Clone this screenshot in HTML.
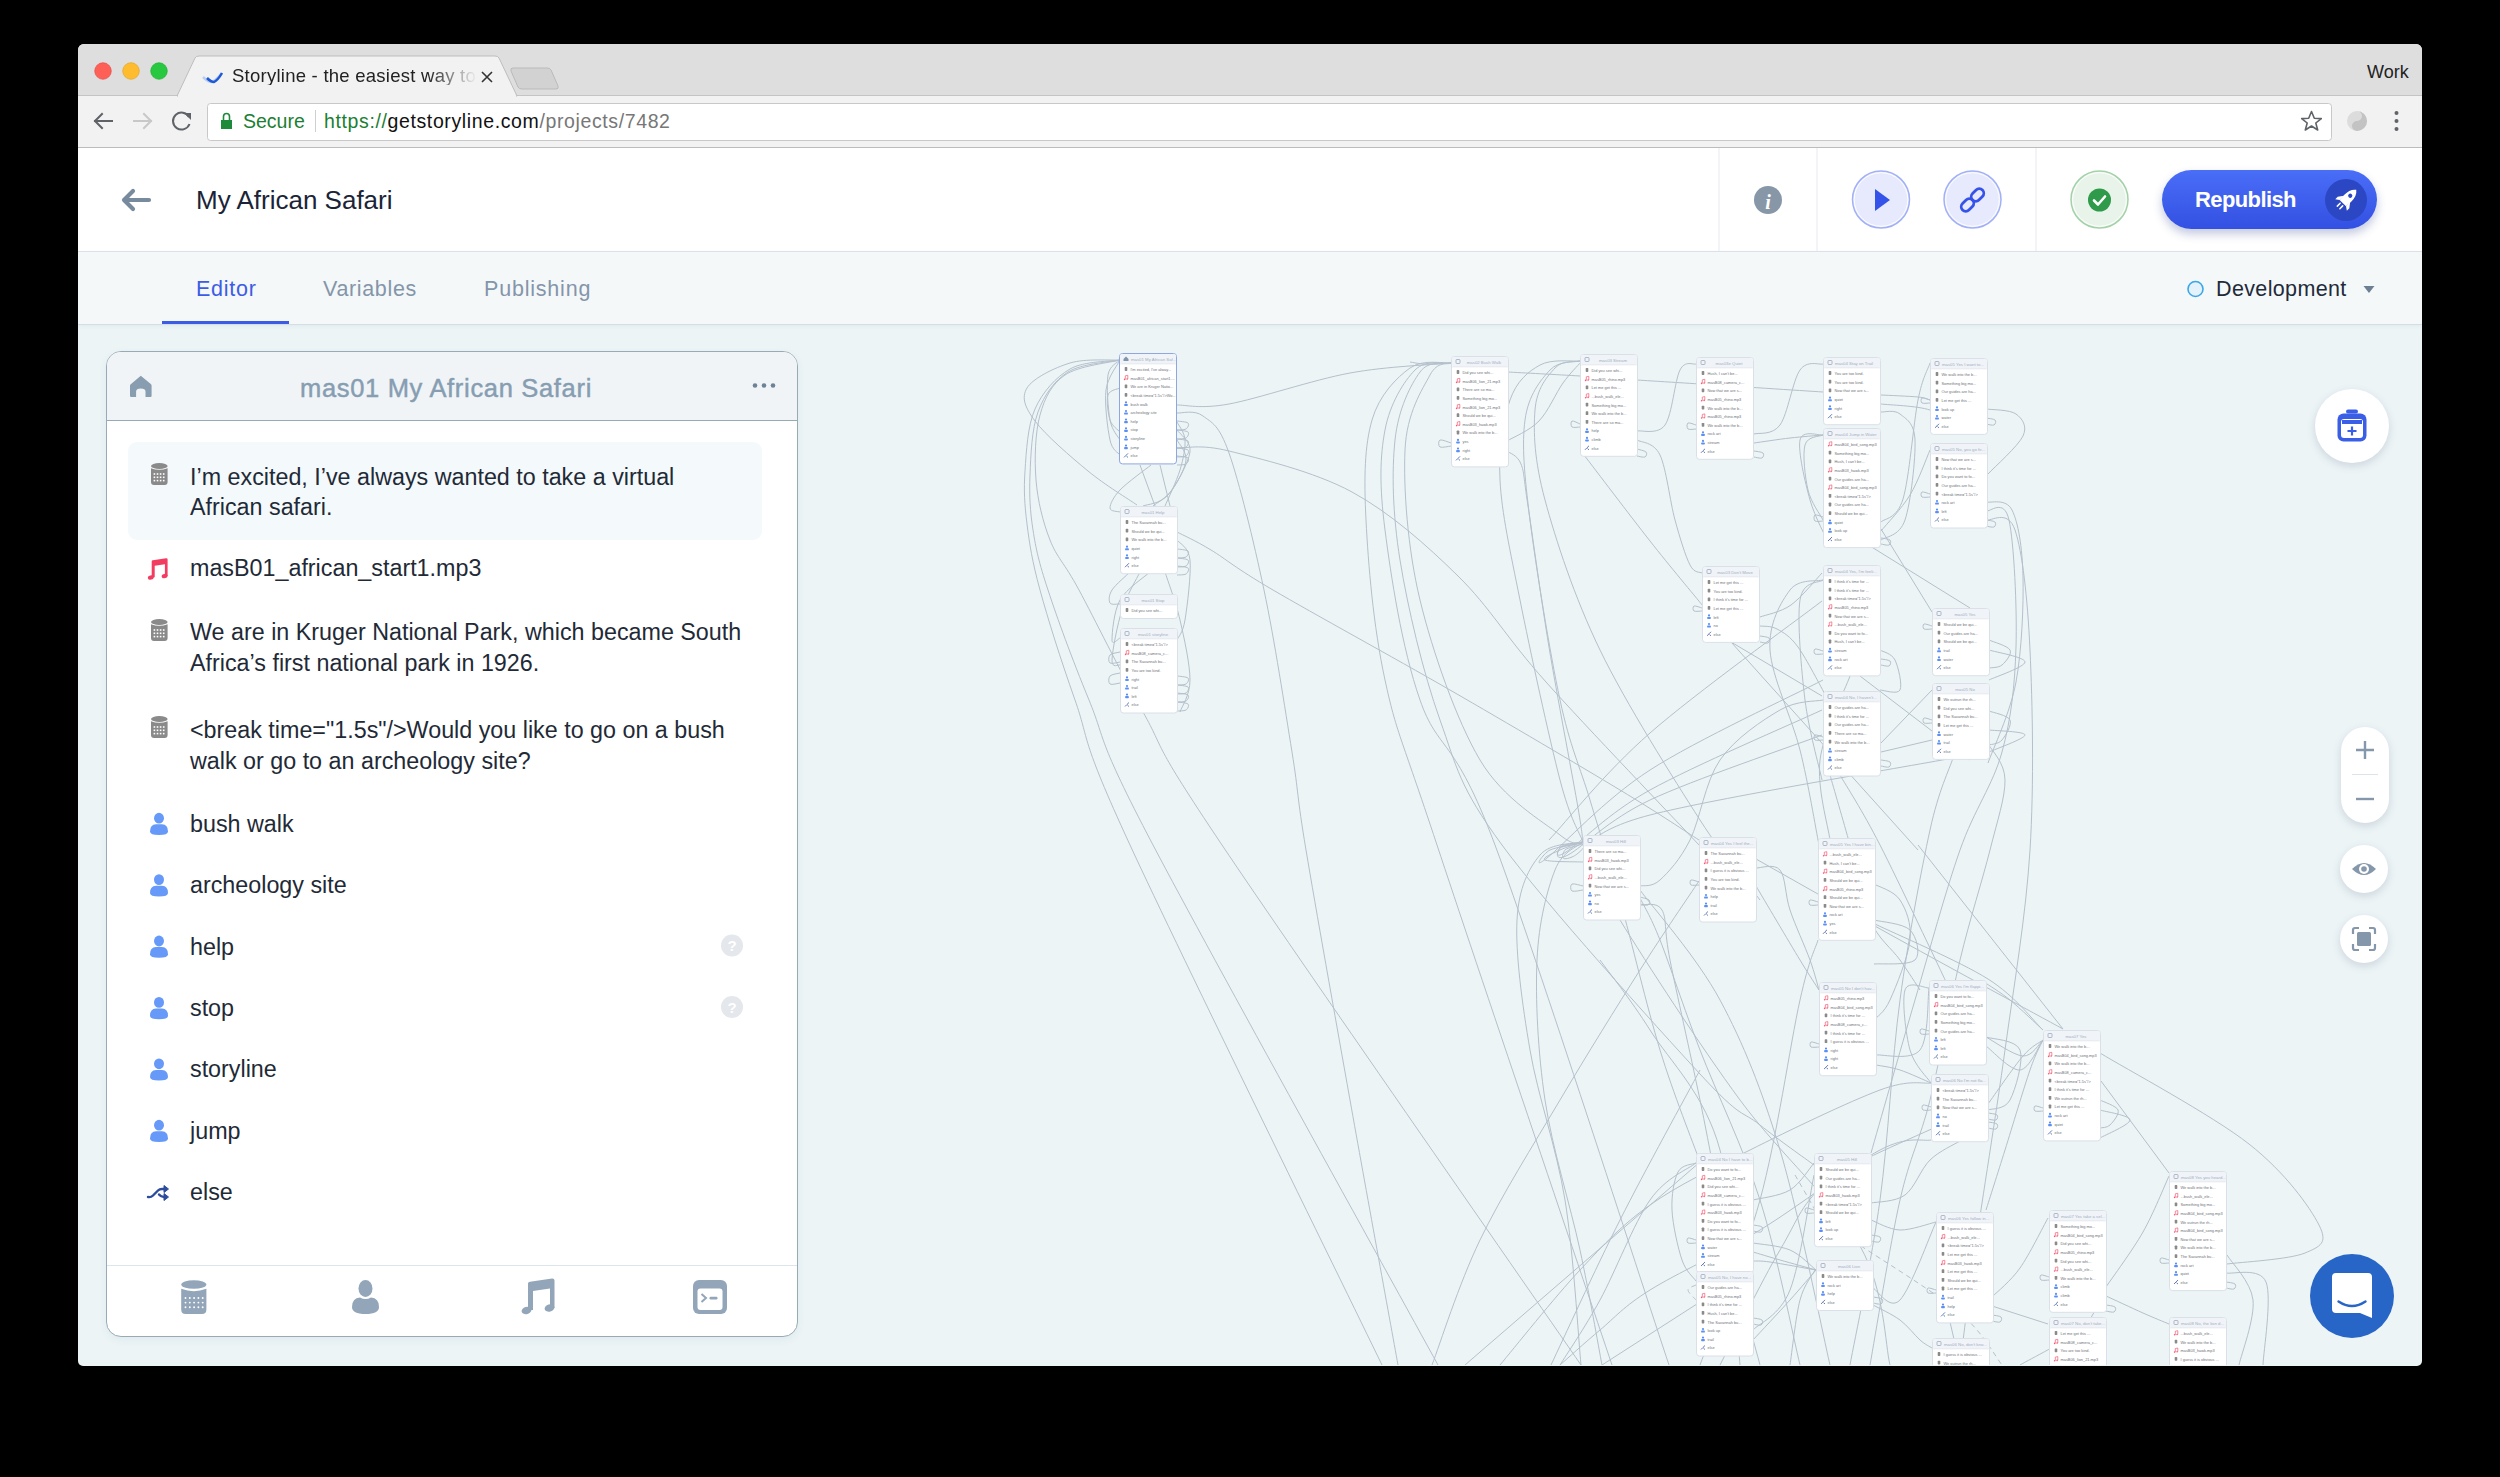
<!DOCTYPE html><html><head><meta charset="utf-8"><style>
*{margin:0;padding:0;box-sizing:border-box}
html,body{width:2500px;height:1477px;background:#000;overflow:hidden;font-family:"Liberation Sans",sans-serif}
.a{position:absolute}
#win{position:absolute;left:78px;top:44px;width:2344px;height:1322px;border-radius:6px 6px 5px 5px;overflow:hidden;background:#ecf4f6}
.t{position:absolute;white-space:nowrap;line-height:1}
</style></head><body>
<div id="win"><div class="a" style="left:-78px;top:-44px;width:2500px;height:1477px"><div class="a" style="left:78px;top:44px;width:2344px;height:52px;background:#dedede"></div><div class="a" style="left:78px;top:95px;width:2344px;height:53px;background:#f2f2f2;border-top:1px solid #c4c4c4;border-bottom:1px solid #bcbcbc"></div><svg class="a" style="left:0;top:0" width="2500" height="160">
<path d="M177 96 L195 58 Q196 56 199 56 L495 56 Q498 56 499 58 L517 96 Z" fill="#f2f2f2" stroke="#bdbdbd" stroke-width="1"/>
<rect x="178" y="95" width="338" height="3" fill="#f2f2f2"/>
<path d="M513 68 L547 68 Q550 68 551 70 L558 86 Q559 89 556 89 L522 89 Q519 89 518 87 L511 71 Q510 68 513 68Z" fill="#d2d2d2" stroke="#bababa" stroke-width="1"/>
<circle cx="103" cy="71" r="8.3" fill="#fe5f57" stroke="#e2463f" stroke-width="0.6"/>
<circle cx="131" cy="71" r="8.3" fill="#febc2e" stroke="#e1a116" stroke-width="0.6"/>
<circle cx="159" cy="71" r="8.3" fill="#28c840" stroke="#1aab29" stroke-width="0.6"/>
<!-- favicon -->
<path d="M203 77 Q208 82 212 82 Q216 80 222 73" stroke="#b9cdf0" stroke-width="2.5" fill="none"/>
<path d="M207 78 Q211 82 214 82 Q218 80 222 73" stroke="#1f5ad6" stroke-width="2.5" fill="none"/>
<!-- close x -->
<path d="M482 72 L492 82 M492 72 L482 82" stroke="#333" stroke-width="1.6"/>
<!-- nav arrows -->
<path d="M95 121 L112 121 M95 121 L102 114 M95 121 L102 128" stroke="#5f6368" stroke-width="2" fill="none" stroke-linecap="square"/>
<path d="M151 121 L134 121 M151 121 L144 114 M151 121 L144 128" stroke="#c8c8c8" stroke-width="2" fill="none" stroke-linecap="square"/>
<path d="M189 117 A8.5 8.5 0 1 0 189.5 124" stroke="#5f6368" stroke-width="2" fill="none"/>
<path d="M184 113 L191 113 L191 120 Z" fill="#5f6368"/>
<!-- address bar -->
<rect x="207.5" y="103.5" width="2124" height="37" rx="3" fill="#fff" stroke="#c8c8c8" stroke-width="1"/>
<rect x="221" y="120" width="11" height="9" fill="#1d8a3a"/>
<path d="M223.5 120 V116.5 A3 3 0 0 1 229.5 116.5 V120" stroke="#1d8a3a" stroke-width="1.6" fill="none"/>
<rect x="315" y="110" width="1" height="22" fill="#cfcfcf"/>
<!-- star -->
<path d="M2311.5 111.5 L2314.3 118.2 L2321.3 118.6 L2315.8 123 L2317.7 130 L2311.5 126 L2305.3 130 L2307.2 123 L2301.7 118.6 L2308.7 118.2 Z" fill="none" stroke="#5f6368" stroke-width="1.6" stroke-linejoin="round"/>
<!-- extension -->
<circle cx="2357" cy="121" r="10" fill="#dcdcdc"/>
<path d="M2357 111 A10 10 0 0 1 2357 131 A5 5 0 0 1 2357 121 A5 5 0 0 0 2357 111Z" fill="#c3c3c3"/>
<circle cx="2396.5" cy="113" r="2" fill="#5f6368"/><circle cx="2396.5" cy="121" r="2" fill="#5f6368"/><circle cx="2396.5" cy="129" r="2" fill="#5f6368"/>
</svg><div class="t" style="left:232px;top:66.9px;font-size:18.5px;color:#222;font-weight:normal;letter-spacing:0.25px;width:245px;overflow:hidden;-webkit-mask-image:linear-gradient(90deg,#000 80%,transparent 100%)">Storyline - the easiest way to c</div><div class="t" style="left:2367px;top:63.2px;font-size:18px;color:#222;font-weight:normal;">Work</div><div class="t" style="left:243px;top:112.1px;font-size:19.5px;color:#1b7f33;font-weight:normal;">Secure</div><div class="t" style="left:324px;top:112.1px;font-size:19.5px;color:#111;font-weight:normal;letter-spacing:0.62px"><span style="color:#1b7f33">https://</span><span style="color:#111">getstoryline.com</span><span style="color:#777">/projects/7482</span></div><div class="a" style="left:78px;top:148px;width:2344px;height:104px;background:#fff;border-bottom:1px solid #dfe3ee"></div><div class="a" style="left:78px;top:252px;width:2344px;height:73px;background:#f4f8f9;border-bottom:1.5px solid #d6dee5;box-shadow:0 1px 4px rgba(60,80,100,0.07)"></div><div class="t" style="left:196px;top:187.0px;font-size:26px;color:#1b2437;font-weight:normal;">My African Safari</div><svg class="a" style="left:0;top:140px" width="2500" height="200">
<g transform="translate(0,-140)">
<path d="M124 200 L149 200 M124 200 L133 191 M124 200 L133 209" stroke="#778a9e" stroke-width="4.2" fill="none" stroke-linecap="round" stroke-linejoin="round"/>
<rect x="1718.5" y="148" width="1" height="103" fill="#e6e9f2"/>
<rect x="1816.5" y="148" width="1" height="103" fill="#e6e9f2"/>
<rect x="2035.5" y="148" width="1" height="103" fill="#e6e9f2"/>
<circle cx="1768" cy="200" r="14" fill="#8797a8"/>
<text x="1768" y="209" font-family="Liberation Serif" font-style="italic" font-weight="bold" font-size="20" fill="#fff" text-anchor="middle">i</text>
<circle cx="1881" cy="199.5" r="28.5" fill="#e7eafc" stroke="#a2b1f7" stroke-width="1.5"/><circle cx="1881" cy="199.5" r="26.8" fill="none" stroke="#fff" stroke-width="1"/>
<path d="M1875 189 L1890 200 L1875 211 Z" fill="#3553e8"/>
<circle cx="1972.5" cy="199.5" r="28.5" fill="#e7eafc" stroke="#a2b1f7" stroke-width="1.5"/><circle cx="1972.5" cy="199.5" r="26.8" fill="none" stroke="#fff" stroke-width="1"/>
<g stroke="#3553e8" stroke-width="2.8" fill="none" stroke-linecap="round">
<rect x="1963" y="198" width="9" height="14" rx="4.5" transform="rotate(45 1967.5 205)"/>
<rect x="1973" y="188" width="9" height="14" rx="4.5" transform="rotate(45 1977.5 195)"/>
</g>
<circle cx="2099.5" cy="199.5" r="28.5" fill="#e8f3ea" stroke="#a3d2a9" stroke-width="1.5"/><circle cx="2099.5" cy="199.5" r="26.8" fill="none" stroke="#fff" stroke-width="1"/>
<circle cx="2099.5" cy="200" r="11.5" fill="#2e9a4a"/>
<path d="M2094 200.5 L2098 204.5 L2105 196.5" stroke="#fff" stroke-width="2.6" fill="none" stroke-linecap="round" stroke-linejoin="round"/>
</g></svg><div class="a" style="left:2162px;top:170px;width:215px;height:59px;border-radius:30px;background:linear-gradient(180deg,#4a6ef8,#3350e2);box-shadow:0 5px 10px rgba(40,60,140,0.28)"></div><div class="t" style="left:2195px;top:188.9px;font-size:22px;color:#fff;font-weight:bold;letter-spacing:-0.6px">Republish</div><svg class="a" style="left:2325px;top:179px" width="42" height="42"><circle cx="21" cy="21" r="21" fill="#2c47c4"/>
<g transform="rotate(45 21 21)">
<path d="M21 6.5 Q26.2 10.5 25.8 18.5 L25.5 25.5 L16.5 25.5 L16.2 18.5 Q15.8 10.5 21 6.5Z" fill="#fff"/>
<path d="M16.6 19.5 L12.8 24.5 L12.8 28 L16.5 25.5Z M25.4 19.5 L29.2 24.5 L29.2 28 L25.5 25.5Z" fill="#fff"/>
<circle cx="21" cy="15" r="2.1" fill="#2c47c4"/>
<path d="M19.2 27.5 L19.2 31.5 M22.8 27.5 L22.8 31.5" stroke="#fff" stroke-width="1.5" stroke-linecap="round"/>
</g></svg><div class="t" style="left:196px;top:279.3px;font-size:21.5px;color:#3d5ce5;font-weight:normal;letter-spacing:0.75px">Editor</div><div class="t" style="left:323px;top:279.3px;font-size:21.5px;color:#8595a9;font-weight:normal;letter-spacing:0.65px">Variables</div><div class="t" style="left:484px;top:279.3px;font-size:21.5px;color:#8595a9;font-weight:normal;letter-spacing:0.8px">Publishing</div><div class="a" style="left:162px;top:321px;width:127px;height:3px;background:#3d5ce5"></div><svg class="a" style="left:2180px;top:275px" width="200" height="30"><circle cx="15.5" cy="14" r="7.5" fill="#e4f2fb" stroke="#3ca6e6" stroke-width="1.6"/>
<path d="M183.5 11 L194.5 11 L189 18 Z" fill="#6c7f93"/></svg><div class="t" style="left:2216px;top:279.3px;font-size:21.5px;color:#1f2a3a;font-weight:normal;letter-spacing:0.36px">Development</div><svg class="a" style="left:0;top:0" width="2500" height="1365" font-family="Liberation Sans"><g fill="none" stroke="#b4c0cb" stroke-width="1"><path d="M1120 360 C1111.7 360.5 1085.5 358.3 1070.0 363.0 C1054.5 367.7 1032.8 378.3 1027.0 388.0 C1021.2 397.7 1024.8 407.2 1035.0 421.0 C1045.2 434.8 1071.0 457.0 1088.0 471.0 C1105.0 485.0 1128.8 499.3 1137.0 505.0"/><path d="M1120 360 C1111.7 361.5 1084.2 360.8 1070.0 369.0 C1055.8 377.2 1042.5 392.0 1035.0 409.0 C1027.5 426.0 1026.3 451.8 1025.0 471.0 C1023.7 490.2 1024.5 504.2 1027.0 524.0 C1029.5 543.8 1032.0 560.7 1040.0 590.0 C1048.0 619.3 1060.0 657.5 1075.0 700.0 C1090.0 742.5 1078.8 734.2 1130.0 845.0 C1181.2 955.8 1340.0 1278.3 1382.0 1365.0"/><path d="M1120 360 C1111.3 362.0 1081.7 363.3 1068.0 372.0 C1054.3 380.7 1044.3 394.8 1038.0 412.0 C1031.7 429.2 1030.8 455.3 1030.0 475.0 C1029.2 494.7 1030.0 510.8 1033.0 530.0 C1036.0 549.2 1038.7 561.7 1048.0 590.0 C1057.3 618.3 1071.5 657.5 1089.0 700.0 C1106.5 742.5 1094.8 734.2 1153.0 845.0 C1211.2 955.8 1390.5 1278.3 1438.0 1365.0"/><path d="M1120 360 C1110.8 362.5 1078.3 365.8 1065.0 375.0 C1051.7 384.2 1044.8 397.5 1040.0 415.0 C1035.2 432.5 1034.3 459.2 1036.0 480.0 C1037.7 500.8 1042.8 521.7 1050.0 540.0 C1057.2 558.3 1063.5 561.3 1079.0 590.0 C1094.5 618.7 1119.2 669.5 1143.0 712.0 C1166.8 754.5 1149.0 736.2 1222.0 845.0 C1295.0 953.8 1521.2 1278.3 1581.0 1365.0"/><path d="M1120 360 C1118.0 362.5 1109.7 365.0 1108.0 375.0 C1106.3 385.0 1108.0 409.2 1110.0 420.0 C1112.0 430.8 1118.3 436.7 1120.0 440.0"/><path d="M1120 360 C1117.7 365.0 1107.7 376.7 1106.0 390.0 C1104.3 403.3 1107.7 429.2 1110.0 440.0 C1112.3 450.8 1118.3 452.5 1120.0 455.0"/><path d="M1120 388 C1118.0 389.2 1109.7 389.7 1108.0 395.0 C1106.3 400.3 1108.0 413.8 1110.0 420.0 C1112.0 426.2 1118.3 430.0 1120.0 432.0"/><path d="M1177 405 C1185.7 404.8 1200.2 409.3 1229.0 404.0 C1257.8 398.7 1313.0 379.8 1350.0 373.0 C1387.0 366.2 1434.2 364.7 1451.0 363.0"/><path d="M1177 413 C1181.3 413.5 1194.3 409.3 1203.0 416.0 C1211.7 422.7 1218.8 424.0 1229.0 453.0 C1239.2 482.0 1253.5 540.2 1264.0 590.0 C1274.5 639.8 1285.0 708.7 1292.0 752.0 C1299.0 795.3 1296.3 792.0 1306.0 850.0 C1315.7 908.0 1334.7 1014.2 1350.0 1100.0 C1365.3 1185.8 1390.0 1320.8 1398.0 1365.0"/><path d="M1177 448 C1185.7 448.5 1199.8 443.7 1229.0 451.0 C1258.2 458.3 1313.8 471.2 1352.0 492.0 C1390.2 512.8 1425.7 544.3 1458.0 576.0 C1490.3 607.7 1505.7 637.0 1546.0 682.0 C1586.3 727.0 1674.3 818.7 1700.0 846.0"/><path d="M1177 532 C1182.7 535.0 1195.0 540.3 1211.0 550.0 C1227.0 559.7 1233.2 566.7 1273.0 590.0 C1312.8 613.3 1392.2 656.7 1450.0 690.0 C1507.8 723.3 1578.5 765.0 1620.0 790.0 C1661.5 815.0 1685.8 831.7 1699.0 840.0"/><path d="M1177 440 C1178.5 443.3 1186.8 451.7 1186.0 460.0 C1185.2 468.3 1177.5 482.3 1172.0 490.0 C1166.5 497.7 1156.2 503.3 1153.0 506.0"/><path d="M1177 430 C1179.2 433.7 1191.5 441.2 1190.0 452.0 C1188.5 462.8 1175.8 486.0 1168.0 495.0 C1160.2 504.0 1147.2 504.2 1143.0 506.0"/><path d="M1177 422 C1178.3 425.0 1184.5 432.0 1185.0 440.0 C1185.5 448.0 1183.3 459.0 1180.0 470.0 C1176.7 481.0 1167.5 500.0 1165.0 506.0"/><path d="M1151 465 C1145.8 469.2 1126.8 482.8 1120.0 490.0 C1113.2 497.2 1110.0 504.3 1110.0 508.0 C1110.0 511.7 1118.3 511.3 1120.0 512.0"/><path d="M1160 465 L1170 506"/><path d="M1140 465 L1155 506"/><path d="M1177 421 C1178.8 421.3 1186.5 421.7 1188.0 423.0 C1189.5 424.3 1187.8 427.8 1186.0 429.0 C1184.2 430.2 1178.5 429.8 1177.0 430.0"/><path d="M1177 430 C1178.8 430.3 1186.5 430.7 1188.0 432.0 C1189.5 433.3 1187.8 436.8 1186.0 438.0 C1184.2 439.2 1178.5 438.8 1177.0 439.0"/><path d="M1177 439 C1178.8 439.3 1186.5 439.7 1188.0 441.0 C1189.5 442.3 1187.8 445.8 1186.0 447.0 C1184.2 448.2 1178.5 447.8 1177.0 448.0"/><path d="M1177 448 C1178.8 448.3 1186.5 448.7 1188.0 450.0 C1189.5 451.3 1187.8 454.8 1186.0 456.0 C1184.2 457.2 1178.5 456.8 1177.0 457.0"/><path d="M1177 456 C1178.8 456.3 1186.5 456.7 1188.0 458.0 C1189.5 459.3 1187.8 462.8 1186.0 464.0 C1184.2 465.2 1178.5 464.8 1177.0 465.0"/><path d="M1177 549 C1178.8 549.3 1186.5 549.7 1188.0 551.0 C1189.5 552.3 1187.8 555.8 1186.0 557.0 C1184.2 558.2 1178.5 557.8 1177.0 558.0"/><path d="M1177 558 C1178.8 558.3 1186.5 558.7 1188.0 560.0 C1189.5 561.3 1187.8 564.8 1186.0 566.0 C1184.2 567.2 1178.5 566.8 1177.0 567.0"/><path d="M1177 566 C1178.8 566.3 1186.5 566.7 1188.0 568.0 C1189.5 569.3 1187.8 572.8 1186.0 574.0 C1184.2 575.2 1178.5 574.8 1177.0 575.0"/><path d="M1177 540 C1179.2 543.3 1188.7 546.7 1190.0 560.0 C1191.3 573.3 1187.2 606.7 1185.0 620.0 C1182.8 633.3 1178.3 636.7 1177.0 640.0"/><path d="M1130 572 C1127.0 575.0 1115.3 584.8 1112.0 590.0 C1108.7 595.2 1108.7 600.7 1110.0 603.0 C1111.3 605.3 1118.3 603.8 1120.0 604.0"/><path d="M1150 572 C1145.0 576.7 1126.3 588.7 1120.0 600.0 C1113.7 611.3 1112.0 633.7 1112.0 640.0 C1112.0 646.3 1118.7 638.3 1120.0 638.0"/><path d="M1165 572 C1167.5 580.0 1175.8 602.0 1180.0 620.0 C1184.2 638.0 1190.0 664.7 1190.0 680.0 C1190.0 695.3 1181.7 706.7 1180.0 712.0"/><path d="M1140 572 C1137.0 578.3 1126.7 595.3 1122.0 610.0 C1117.3 624.7 1112.3 650.8 1112.0 660.0 C1111.7 669.2 1118.7 664.2 1120.0 665.0"/><path d="M1177 676 C1178.8 676.3 1186.5 676.7 1188.0 678.0 C1189.5 679.3 1187.8 682.8 1186.0 684.0 C1184.2 685.2 1178.5 684.8 1177.0 685.0"/><path d="M1177 685 C1178.8 685.3 1186.5 685.7 1188.0 687.0 C1189.5 688.3 1187.8 691.8 1186.0 693.0 C1184.2 694.2 1178.5 693.8 1177.0 694.0"/><path d="M1177 693 C1178.8 693.3 1186.5 693.7 1188.0 695.0 C1189.5 696.3 1187.8 699.8 1186.0 701.0 C1184.2 702.2 1178.5 701.8 1177.0 702.0"/><path d="M1177 702 C1178.8 702.3 1186.5 702.7 1188.0 704.0 C1189.5 705.3 1187.8 708.8 1186.0 710.0 C1184.2 711.2 1178.5 710.8 1177.0 711.0"/><path d="M1120 652 C1118.3 652.5 1111.7 653.2 1110.0 655.0 C1108.3 656.8 1108.3 661.8 1110.0 663.0 C1111.7 664.2 1118.3 662.2 1120.0 662.0"/><path d="M1120 673 C1118.3 673.5 1111.7 674.2 1110.0 676.0 C1108.3 677.8 1108.3 682.8 1110.0 684.0 C1111.7 685.2 1118.3 683.2 1120.0 683.0"/><path d="M1451 363 C1444.2 363.8 1423.2 358.5 1410.0 368.0 C1396.8 377.5 1379.3 394.7 1372.0 420.0 C1364.7 445.3 1363.8 476.7 1366.0 520.0 C1368.2 563.3 1373.2 625.8 1385.0 680.0 C1396.8 734.2 1399.2 730.8 1437.0 845.0 C1474.8 959.2 1582.8 1278.3 1612.0 1365.0"/><path d="M1451 363 C1445.0 364.2 1426.0 358.8 1415.0 370.0 C1404.0 381.2 1390.0 403.3 1385.0 430.0 C1380.0 456.7 1379.2 485.0 1385.0 530.0 C1390.8 575.0 1401.7 647.5 1420.0 700.0 C1438.3 752.5 1453.5 734.2 1495.0 845.0 C1536.5 955.8 1640.0 1278.3 1669.0 1365.0"/><path d="M1451 363 C1445.8 364.5 1429.3 359.2 1420.0 372.0 C1410.7 384.8 1398.3 408.7 1395.0 440.0 C1391.7 471.3 1392.5 513.3 1400.0 560.0 C1407.5 606.7 1423.0 672.5 1440.0 720.0 C1457.0 767.5 1458.7 786.0 1502.0 845.0 C1545.3 904.0 1657.0 1027.3 1700.0 1074.0 C1743.0 1120.7 1741.0 1109.8 1760.0 1125.0 C1779.0 1140.2 1805.0 1158.3 1814.0 1165.0"/><path d="M1451 363 C1447.5 365.0 1437.7 360.5 1430.0 375.0 C1422.3 389.5 1406.7 412.5 1405.0 450.0 C1403.3 487.5 1407.5 548.3 1420.0 600.0 C1432.5 651.7 1456.7 720.8 1480.0 760.0 C1503.3 799.2 1542.8 821.3 1560.0 835.0 C1577.2 848.7 1579.2 840.8 1583.0 842.0"/><path d="M1451 363 C1446.7 363.2 1431.8 364.2 1425.0 364.0 C1418.2 363.8 1412.5 362.3 1410.0 362.0"/><path d="M1451 443 C1449.2 442.5 1441.8 439.3 1440.0 440.0 C1438.2 440.7 1438.2 446.0 1440.0 447.0 C1441.8 448.0 1449.2 446.2 1451.0 446.0"/><path d="M1580 361 C1573.3 361.7 1551.7 358.5 1540.0 365.0 C1528.3 371.5 1516.7 380.8 1510.0 400.0 C1503.3 419.2 1498.3 446.7 1500.0 480.0 C1501.7 513.3 1510.0 550.0 1520.0 600.0 C1530.0 650.0 1549.5 739.7 1560.0 780.0 C1570.5 820.3 1579.2 831.7 1583.0 842.0"/><path d="M1580 361 C1575.0 362.5 1559.2 360.2 1550.0 370.0 C1540.8 379.8 1528.3 395.0 1525.0 420.0 C1521.7 445.0 1524.2 473.3 1530.0 520.0 C1535.8 566.7 1550.0 653.3 1560.0 700.0 C1570.0 746.7 1580.0 766.7 1590.0 800.0 C1600.0 833.3 1608.3 858.3 1620.0 900.0 C1631.7 941.7 1646.7 1006.3 1660.0 1050.0 C1673.3 1093.7 1693.3 1143.3 1700.0 1162.0"/><path d="M1580 361 C1575.8 362.2 1562.5 359.8 1555.0 368.0 C1547.5 376.2 1536.7 388.0 1535.0 410.0 C1533.3 432.0 1534.2 460.0 1545.0 500.0 C1555.8 540.0 1574.2 596.7 1600.0 650.0 C1625.8 703.3 1673.3 778.3 1700.0 820.0 C1726.7 861.7 1750.0 886.7 1760.0 900.0"/><path d="M1508 372 C1520.0 372.7 1558.5 374.7 1580.0 376.0 C1601.5 377.3 1617.0 378.7 1637.0 380.0 C1657.0 381.3 1669.0 382.0 1700.0 384.0 C1731.0 386.0 1802.5 390.7 1823.0 392.0"/><path d="M1507 441 C1512.3 437.7 1529.7 430.7 1539.0 421.0 C1548.3 411.3 1556.0 392.8 1563.0 383.0 C1570.0 373.2 1578.0 365.5 1581.0 362.0"/><path d="M1507 451 C1509.3 453.2 1517.5 454.8 1521.0 464.0 C1524.5 473.2 1523.3 475.5 1528.0 506.0 C1532.7 536.5 1540.8 597.7 1549.0 647.0 C1557.2 696.3 1571.3 769.5 1577.0 802.0 C1582.7 834.5 1582.0 835.3 1583.0 842.0"/><path d="M1584 455 C1595.0 469.3 1630.2 515.8 1650.0 541.0 C1669.8 566.2 1694.2 595.2 1703.0 606.0"/><path d="M1637 431 C1641.7 430.0 1657.8 435.2 1665.0 425.0 C1672.2 414.8 1674.8 380.2 1680.0 370.0 C1685.2 359.8 1693.3 365.0 1696.0 364.0"/><path d="M1637 440 C1640.8 442.5 1653.7 441.7 1660.0 455.0 C1666.3 468.3 1670.0 501.7 1675.0 520.0 C1680.0 538.3 1685.5 556.2 1690.0 565.0 C1694.5 573.8 1700.0 571.7 1702.0 573.0"/><path d="M1637 449 C1638.5 449.5 1644.7 450.7 1646.0 452.0 C1647.3 453.3 1646.5 456.3 1645.0 457.0 C1643.5 457.7 1638.3 456.2 1637.0 456.0"/><path d="M1580 424 C1578.7 423.5 1573.3 420.5 1572.0 421.0 C1570.7 421.5 1570.7 426.0 1572.0 427.0 C1573.3 428.0 1578.7 427.0 1580.0 427.0"/><path d="M1754 434 C1758.3 432.5 1772.3 435.7 1780.0 425.0 C1787.7 414.3 1792.8 380.2 1800.0 370.0 C1807.2 359.8 1819.2 365.0 1823.0 364.0"/><path d="M1754 443 C1760.0 442.2 1778.5 439.3 1790.0 438.0 C1801.5 436.7 1817.5 435.5 1823.0 435.0"/><path d="M1754 451 C1755.5 451.3 1761.7 451.8 1763.0 453.0 C1764.3 454.2 1763.5 457.3 1762.0 458.0 C1760.5 458.7 1755.3 457.2 1754.0 457.0"/><path d="M1696 425 C1694.7 424.7 1689.3 422.3 1688.0 423.0 C1686.7 423.7 1686.7 428.0 1688.0 429.0 C1689.3 430.0 1694.7 429.0 1696.0 429.0"/><path d="M1583 842 C1575.8 844.2 1551.0 842.0 1540.0 855.0 C1529.0 868.0 1518.7 887.5 1517.0 920.0 C1515.3 952.5 1522.0 1003.3 1530.0 1050.0 C1538.0 1096.7 1556.5 1147.5 1565.0 1200.0 C1573.5 1252.5 1578.3 1337.5 1581.0 1365.0"/><path d="M1583 842 C1578.3 846.7 1562.7 850.3 1555.0 870.0 C1547.3 889.7 1538.7 921.7 1537.0 960.0 C1535.3 998.3 1537.8 1051.7 1545.0 1100.0 C1552.2 1148.3 1570.5 1205.8 1580.0 1250.0 C1589.5 1294.2 1598.3 1345.8 1602.0 1365.0"/><path d="M1432 1365 C1440.0 1344.2 1458.7 1284.2 1480.0 1240.0 C1501.3 1195.8 1533.3 1145.0 1560.0 1100.0 C1586.7 1055.0 1616.8 1006.5 1640.0 970.0 C1663.2 933.5 1689.2 895.8 1699.0 881.0"/><path d="M1465 1365 L1700 1162"/><path d="M1551 1365 C1562.5 1340.8 1595.2 1269.2 1620.0 1220.0 C1644.8 1170.8 1686.7 1095.0 1700.0 1070.0"/><path d="M1602 1365 L1700 1302"/><path d="M1583 842 C1579.2 843.3 1566.3 847.0 1560.0 850.0 C1553.7 853.0 1541.2 858.0 1545.0 860.0 C1548.8 862.0 1576.7 861.7 1583.0 862.0"/><path d="M1583 842 C1577.5 843.3 1556.0 847.3 1550.0 850.0 C1544.0 852.7 1530.3 871.3 1547.0 858.0 C1563.7 844.7 1604.0 799.7 1650.0 770.0 C1696.0 740.3 1794.2 695.0 1823.0 680.0"/><path d="M1583 886 C1581.2 885.7 1573.8 883.2 1572.0 884.0 C1570.2 884.8 1570.2 890.0 1572.0 891.0 C1573.8 892.0 1581.2 890.2 1583.0 890.0"/><path d="M1640 886 C1643.3 885.0 1651.7 887.7 1660.0 880.0 C1668.3 872.3 1680.0 860.0 1690.0 840.0 C1700.0 820.0 1705.0 781.7 1720.0 760.0 C1735.0 738.3 1762.8 720.0 1780.0 710.0 C1797.2 700.0 1815.8 701.7 1823.0 700.0"/><path d="M1640 897 C1641.5 897.5 1647.7 898.7 1649.0 900.0 C1650.3 901.3 1649.5 904.3 1648.0 905.0 C1646.5 905.7 1641.3 904.2 1640.0 904.0"/><path d="M1640 905 C1643.7 905.8 1657.0 900.8 1662.0 910.0 C1667.0 919.2 1663.7 928.3 1670.0 960.0 C1676.3 991.7 1690.0 1051.7 1700.0 1100.0 C1710.0 1148.3 1720.0 1205.8 1730.0 1250.0 C1740.0 1294.2 1755.0 1345.8 1760.0 1365.0"/><path d="M1823 435 C1820.0 436.7 1807.5 435.8 1805.0 445.0 C1802.5 454.2 1805.0 477.5 1808.0 490.0 C1811.0 502.5 1820.5 515.0 1823.0 520.0"/><path d="M1823 435 C1819.2 435.8 1802.2 429.2 1800.0 440.0 C1797.8 450.8 1805.0 482.3 1810.0 500.0 C1815.0 517.7 1826.7 538.3 1830.0 546.0"/><path d="M1823 517 C1821.7 516.7 1816.3 514.3 1815.0 515.0 C1813.7 515.7 1813.7 520.0 1815.0 521.0 C1816.3 522.0 1821.7 521.0 1823.0 521.0"/><path d="M1881 395 C1887.2 395.3 1909.8 396.2 1918.0 397.0 C1926.2 397.8 1928.0 399.5 1930.0 400.0"/><path d="M1881 404 C1889.2 405.0 1916.8 405.7 1930.0 410.0 C1943.2 414.3 1955.0 426.7 1960.0 430.0"/><path d="M1881 412 C1884.2 412.3 1894.3 409.3 1900.0 414.0 C1905.7 418.7 1914.2 422.3 1915.0 440.0 C1915.8 457.7 1910.7 503.3 1905.0 520.0 C1899.3 536.7 1885.0 536.7 1881.0 540.0"/><path d="M1881 522 C1884.7 518.2 1896.8 519.3 1903.0 499.0 C1909.2 478.7 1913.5 422.7 1918.0 400.0 C1922.5 377.3 1928.0 369.2 1930.0 363.0"/><path d="M1881 531 C1885.8 525.0 1901.8 508.5 1910.0 495.0 C1918.2 481.5 1926.7 457.5 1930.0 450.0"/><path d="M1870 546 L1970 608"/><path d="M1881 529 L1932 612"/><path d="M1881 538 C1882.5 538.3 1888.7 538.8 1890.0 540.0 C1891.3 541.2 1890.5 544.3 1889.0 545.0 C1887.5 545.7 1882.3 544.2 1881.0 544.0"/><path d="M1986 409 C1991.0 409.8 2009.8 409.5 2016.0 414.0 C2022.2 418.5 2027.7 426.0 2023.0 436.0 C2018.3 446.0 1993.8 467.7 1988.0 474.0"/><path d="M1986 418 C1987.5 418.3 1993.7 418.8 1995.0 420.0 C1996.3 421.2 1995.5 424.3 1994.0 425.0 C1992.5 425.7 1987.3 424.2 1986.0 424.0"/><path d="M1930 400 C1928.7 399.7 1923.3 397.5 1922.0 398.0 C1920.7 398.5 1920.7 402.2 1922.0 403.0 C1923.3 403.8 1928.7 403.0 1930.0 403.0"/><path d="M1930 494 C1928.7 493.7 1923.3 491.5 1922.0 492.0 C1920.7 492.5 1920.7 496.2 1922.0 497.0 C1923.3 497.8 1928.7 497.0 1930.0 497.0"/><path d="M1986 502 C1990.3 503.3 2005.8 497.7 2012.0 510.0 C2018.2 522.3 2022.3 547.3 2023.0 576.0 C2023.7 604.7 2021.8 650.8 2016.0 682.0 C2010.2 713.2 1992.7 749.5 1988.0 763.0"/><path d="M1986 511 C1989.8 512.5 2004.0 497.3 2009.0 520.0 C2014.0 542.7 2017.2 608.3 2016.0 647.0 C2014.8 685.7 2011.3 718.2 2002.0 752.0 C1992.7 785.8 1974.5 808.7 1960.0 850.0 C1945.5 891.3 1929.8 949.5 1915.0 1000.0 C1900.2 1050.5 1878.3 1127.5 1871.0 1153.0"/><path d="M1986 520 C1987.5 520.3 1993.7 520.8 1995.0 522.0 C1996.3 523.2 1995.5 526.3 1994.0 527.0 C1992.5 527.7 1987.3 526.2 1986.0 526.0"/><path d="M1760 617 C1765.2 615.0 1780.7 612.3 1791.0 605.0 C1801.3 597.7 1816.8 578.3 1822.0 573.0"/><path d="M1760 626 C1762.8 626.5 1770.7 625.5 1777.0 629.0 C1783.3 632.5 1789.8 635.8 1798.0 647.0 C1806.2 658.2 1821.3 687.8 1826.0 696.0"/><path d="M1549 840 C1565.8 822.2 1604.5 772.8 1650.0 733.0 C1695.5 693.2 1793.3 623.0 1822.0 601.0"/><path d="M1583 842 C1579.5 842.7 1564.8 844.3 1562.0 846.0 C1559.2 847.7 1551.3 861.3 1566.0 852.0 C1580.7 842.7 1607.3 813.7 1650.0 790.0 C1692.7 766.3 1793.3 723.3 1822.0 710.0"/><path d="M1583 843 C1579.2 843.8 1562.5 846.0 1560.0 848.0 C1557.5 850.0 1553.0 863.0 1568.0 855.0 C1583.0 847.0 1607.7 820.0 1650.0 800.0 C1692.3 780.0 1793.3 745.8 1822.0 735.0"/><path d="M1583 844 C1580.0 845.0 1566.8 847.8 1565.0 850.0 C1563.2 852.2 1557.8 862.8 1572.0 857.0 C1586.2 851.2 1586.5 831.5 1650.0 815.0 C1713.5 798.5 1902.5 767.5 1953.0 758.0"/><path d="M1731 642 L1822 696"/><path d="M1731 642 L1918 850"/><path d="M1860 676 L1970 760"/><path d="M1850 676 C1845.0 690.0 1823.3 732.7 1820.0 760.0 C1816.7 787.3 1828.3 826.7 1830.0 840.0"/><path d="M1880 650 C1882.5 651.7 1891.7 653.3 1895.0 660.0 C1898.3 666.7 1902.5 685.0 1900.0 690.0 C1897.5 695.0 1883.3 690.0 1880.0 690.0"/><path d="M1881 659 C1882.5 659.3 1888.7 659.8 1890.0 661.0 C1891.3 662.2 1890.5 665.3 1889.0 666.0 C1887.5 666.7 1882.3 665.2 1881.0 665.0"/><path d="M1881 743 L1932 690"/><path d="M1881 752 L1932 740"/><path d="M1881 760 C1882.5 760.3 1888.7 760.8 1890.0 762.0 C1891.3 763.2 1890.5 766.3 1889.0 767.0 C1887.5 767.7 1882.3 766.2 1881.0 766.0"/><path d="M1989 640 C1992.5 641.7 2007.8 645.8 2010.0 650.0 C2012.2 654.2 2005.5 662.0 2002.0 665.0 C1998.5 668.0 1991.2 667.5 1989.0 668.0"/><path d="M1989 650 C1995.0 652.0 2025.0 657.0 2025.0 662.0 C2025.0 667.0 1995.0 677.0 1989.0 680.0"/><path d="M1989 711 C1992.5 712.5 2007.8 715.2 2010.0 720.0 C2012.2 724.8 2005.5 735.8 2002.0 740.0 C1998.5 744.2 1991.2 744.2 1989.0 745.0"/><path d="M1989 730 C1995.0 730.8 2025.0 731.3 2025.0 735.0 C2025.0 738.7 1995.0 749.2 1989.0 752.0"/><path d="M1932 626 C1930.7 625.7 1925.3 623.5 1924.0 624.0 C1922.7 624.5 1922.7 628.2 1924.0 629.0 C1925.3 629.8 1930.7 629.0 1932.0 629.0"/><path d="M1932 720 C1930.7 719.7 1925.3 717.5 1924.0 718.0 C1922.7 718.5 1922.7 722.2 1924.0 723.0 C1925.3 723.8 1930.7 723.0 1932.0 723.0"/><path d="M1702 608 C1700.7 607.7 1695.3 605.5 1694.0 606.0 C1692.7 606.5 1692.7 610.2 1694.0 611.0 C1695.3 611.8 1700.7 611.0 1702.0 611.0"/><path d="M1760 636 C1761.5 636.3 1767.7 636.8 1769.0 638.0 C1770.3 639.2 1769.5 642.3 1768.0 643.0 C1766.5 643.7 1761.3 642.2 1760.0 642.0"/><path d="M1823 580 C1817.5 581.7 1798.8 578.3 1790.0 590.0 C1781.2 601.7 1768.3 623.3 1770.0 650.0 C1771.7 676.7 1791.8 717.5 1800.0 750.0 C1808.2 782.5 1815.8 829.2 1819.0 845.0"/><path d="M1823 580 C1819.2 583.3 1803.0 580.0 1800.0 600.0 C1797.0 620.0 1801.3 670.0 1805.0 700.0 C1808.7 730.0 1819.2 766.7 1822.0 780.0"/><path d="M1823 651 C1821.7 650.7 1816.3 648.5 1815.0 649.0 C1813.7 649.5 1813.7 653.2 1815.0 654.0 C1816.3 654.8 1821.7 654.0 1823.0 654.0"/><path d="M1823 737 C1821.7 736.7 1816.3 734.5 1815.0 735.0 C1813.7 735.5 1813.7 739.2 1815.0 740.0 C1816.3 740.8 1821.7 740.0 1823.0 740.0"/><path d="M1756 859 C1780.0 872.5 1848.8 911.7 1900.0 940.0 C1951.2 968.3 2035.8 1014.2 2063.0 1029.0"/><path d="M1875 924 C1893.8 933.2 1960.0 961.3 1988.0 979.0 C2016.0 996.7 2033.8 1021.5 2043.0 1030.0"/><path d="M1918 845 L2063 1029"/><path d="M2100 1053 C2124.8 1068.2 2212.5 1115.3 2249.0 1144.0 C2285.5 1172.7 2309.7 1206.8 2319.0 1225.0 C2328.3 1243.2 2320.3 1246.5 2305.0 1253.0 C2289.7 1259.5 2240.0 1262.2 2227.0 1264.0"/><path d="M2101 1081 L2169 1173"/><path d="M1986 1037 C1992.2 1040.2 2013.5 1055.5 2023.0 1056.0 C2032.5 1056.5 2039.7 1042.7 2043.0 1040.0"/><path d="M1988 1104 C1993.8 1096.0 2013.8 1066.7 2023.0 1056.0 C2032.2 1045.3 2039.7 1042.7 2043.0 1040.0"/><path d="M1992 1297 C1996.7 1292.2 2010.7 1281.2 2020.0 1268.0 C2029.3 1254.8 2043.3 1226.3 2048.0 1218.0"/><path d="M1992 1306 L2048 1324"/><path d="M2106 1287 C2112.2 1277.8 2132.5 1250.5 2143.0 1232.0 C2153.5 1213.5 2164.7 1185.3 2169.0 1176.0"/><path d="M2106 1296 C2112.2 1298.8 2132.5 1308.3 2143.0 1313.0 C2153.5 1317.7 2164.7 1322.2 2169.0 1324.0"/><path d="M2226 1273 C2232.7 1274.5 2259.8 1266.7 2266.0 1282.0 C2272.2 1297.3 2263.5 1351.2 2263.0 1365.0"/><path d="M1756 886 C1763.3 898.3 1789.5 942.7 1800.0 960.0 C1810.5 977.3 1815.8 985.0 1819.0 990.0"/><path d="M1756 868 C1760.0 868.3 1774.3 863.0 1780.0 870.0 C1785.7 877.0 1785.0 895.0 1790.0 910.0 C1795.0 925.0 1805.2 946.7 1810.0 960.0 C1814.8 973.3 1817.5 985.0 1819.0 990.0"/><path d="M1874 884 C1878.3 886.7 1894.0 890.7 1900.0 900.0 C1906.0 909.3 1911.7 923.3 1910.0 940.0 C1908.3 956.7 1896.0 986.7 1890.0 1000.0 C1884.0 1013.3 1876.7 1016.7 1874.0 1020.0"/><path d="M1874 920 C1880.0 921.7 1903.2 923.3 1910.0 930.0 C1916.8 936.7 1921.0 954.3 1915.0 960.0 C1909.0 965.7 1880.8 963.3 1874.0 964.0"/><path d="M1876 1055 C1883.3 1054.2 1911.2 1061.2 1920.0 1050.0 C1928.8 1038.8 1927.5 998.3 1929.0 988.0"/><path d="M1876 1065 C1880.0 1065.8 1890.8 1067.0 1900.0 1070.0 C1909.2 1073.0 1925.8 1080.8 1931.0 1083.0"/><path d="M1929 988 C1925.0 988.3 1908.2 979.7 1905.0 990.0 C1901.8 1000.3 1905.7 1034.5 1910.0 1050.0 C1914.3 1065.5 1927.5 1077.5 1931.0 1083.0"/><path d="M1986 1037 C1991.7 1039.2 2016.0 1039.5 2020.0 1050.0 C2024.0 1060.5 2015.3 1090.0 2010.0 1100.0 C2004.7 1110.0 1991.7 1108.3 1988.0 1110.0"/><path d="M1986 1046 C1991.7 1050.0 2010.5 1071.0 2020.0 1070.0 C2029.5 1069.0 2039.2 1045.0 2043.0 1040.0"/><path d="M1988 1113 C1989.5 1113.3 1995.7 1113.8 1997.0 1115.0 C1998.3 1116.2 1997.5 1119.3 1996.0 1120.0 C1994.5 1120.7 1989.3 1119.2 1988.0 1119.0"/><path d="M1988 1122 C1989.5 1122.3 1995.7 1122.8 1997.0 1124.0 C1998.3 1125.2 1997.5 1128.3 1996.0 1129.0 C1994.5 1129.7 1989.3 1128.2 1988.0 1128.0"/><path d="M2100 1100 C2103.0 1101.7 2116.3 1105.8 2118.0 1110.0 C2119.7 1114.2 2113.0 1122.0 2110.0 1125.0 C2107.0 1128.0 2101.7 1127.5 2100.0 1128.0"/><path d="M2100 1110 C2105.0 1111.7 2130.0 1115.3 2130.0 1120.0 C2130.0 1124.7 2105.0 1135.0 2100.0 1138.0"/><path d="M2043 1108 C2041.7 1107.7 2036.3 1105.5 2035.0 1106.0 C2033.7 1106.5 2033.7 1110.2 2035.0 1111.0 C2036.3 1111.8 2041.7 1111.0 2043.0 1111.0"/><path d="M1929 1031 C1927.7 1030.7 1922.3 1028.5 1921.0 1029.0 C1919.7 1029.5 1919.7 1033.2 1921.0 1034.0 C1922.3 1034.8 1927.7 1034.0 1929.0 1034.0"/><path d="M1931 1107 C1929.7 1106.7 1924.3 1104.5 1923.0 1105.0 C1921.7 1105.5 1921.7 1109.2 1923.0 1110.0 C1924.3 1110.8 1929.7 1110.0 1931.0 1110.0"/><path d="M1819 1044 C1817.7 1043.7 1812.3 1041.5 1811.0 1042.0 C1809.7 1042.5 1809.7 1046.2 1811.0 1047.0 C1812.3 1047.8 1817.7 1047.0 1819.0 1047.0"/><path d="M1818 902 C1816.7 901.7 1811.3 899.5 1810.0 900.0 C1808.7 900.5 1808.7 904.2 1810.0 905.0 C1811.3 905.8 1816.7 905.0 1818.0 905.0"/><path d="M1699 882 C1697.7 881.7 1692.3 879.5 1691.0 880.0 C1689.7 880.5 1689.7 884.2 1691.0 885.0 C1692.3 885.8 1697.7 885.0 1699.0 885.0"/><path d="M1986 520 C1990.8 521.7 2007.7 508.3 2015.0 530.0 C2022.3 551.7 2027.5 596.7 2030.0 650.0 C2032.5 703.3 2034.2 783.3 2030.0 850.0 C2025.8 916.7 2014.2 983.3 2005.0 1050.0 C1995.8 1116.7 1982.5 1197.5 1975.0 1250.0 C1967.5 1302.5 1962.5 1345.8 1960.0 1365.0"/><path d="M1984 982 C1988.3 985.0 2000.2 992.0 2010.0 1000.0 C2019.8 1008.0 2037.5 1025.0 2043.0 1030.0"/><path d="M1840 775 C1846.7 786.7 1861.7 809.2 1880.0 845.0 C1898.3 880.8 1938.3 965.8 1950.0 990.0"/><path d="M1830 775 C1833.3 786.7 1843.3 820.8 1850.0 845.0 C1856.7 869.2 1861.7 900.8 1870.0 920.0 C1878.3 939.2 1891.7 948.3 1900.0 960.0 C1908.3 971.7 1916.7 985.0 1920.0 990.0"/><path d="M1696 1163 C1693.0 1164.5 1682.0 1164.2 1678.0 1172.0 C1674.0 1179.8 1671.3 1195.3 1672.0 1210.0 C1672.7 1224.7 1678.0 1248.2 1682.0 1260.0 C1686.0 1271.8 1693.7 1277.5 1696.0 1281.0"/><path d="M1696 1163 C1688.3 1169.2 1666.0 1177.2 1650.0 1200.0 C1634.0 1222.8 1615.0 1272.5 1600.0 1300.0 C1585.0 1327.5 1566.7 1354.2 1560.0 1365.0"/><path d="M1753 1200 C1759.2 1198.3 1779.8 1196.2 1790.0 1190.0 C1800.2 1183.8 1810.0 1167.5 1814.0 1163.0"/><path d="M1753 1243 C1759.2 1244.2 1779.5 1245.5 1790.0 1250.0 C1800.5 1254.5 1811.7 1266.7 1816.0 1270.0"/><path d="M1753 1252 C1757.5 1253.3 1769.5 1257.0 1780.0 1260.0 C1790.5 1263.0 1810.0 1268.3 1816.0 1270.0"/><path d="M1753 1261 C1755.8 1261.2 1759.5 1260.5 1770.0 1262.0 C1780.5 1263.5 1808.3 1268.7 1816.0 1270.0"/><path d="M1753 1340 C1759.2 1333.3 1779.5 1311.7 1790.0 1300.0 C1800.5 1288.3 1811.7 1275.0 1816.0 1270.0"/><path d="M1753 1330 C1759.2 1323.3 1779.8 1315.8 1790.0 1290.0 C1800.2 1264.2 1810.0 1194.2 1814.0 1175.0"/><path d="M1871 1203 C1876.7 1201.7 1895.2 1202.2 1905.0 1195.0 C1914.8 1187.8 1920.8 1169.0 1930.0 1160.0 C1939.2 1151.0 1955.0 1144.2 1960.0 1141.0"/><path d="M1871 1220 C1875.8 1221.7 1889.2 1229.7 1900.0 1230.0 C1910.8 1230.3 1930.0 1223.3 1936.0 1222.0"/><path d="M1873 1288 C1877.5 1290.0 1889.5 1311.0 1900.0 1300.0 C1910.5 1289.0 1930.0 1235.0 1936.0 1222.0"/><path d="M1873 1305 C1877.5 1307.5 1892.2 1314.2 1900.0 1320.0 C1907.8 1325.8 1914.7 1335.3 1920.0 1340.0 C1925.3 1344.7 1930.0 1346.7 1932.0 1348.0"/><path d="M1871 1235 C1872.5 1235.3 1878.7 1235.8 1880.0 1237.0 C1881.3 1238.2 1880.5 1241.3 1879.0 1242.0 C1877.5 1242.7 1872.3 1241.2 1871.0 1241.0"/><path d="M1873 1297 C1874.5 1297.3 1880.7 1297.8 1882.0 1299.0 C1883.3 1300.2 1882.5 1303.3 1881.0 1304.0 C1879.5 1304.7 1874.3 1303.2 1873.0 1303.0"/><path d="M1753 1225 C1754.5 1225.3 1760.7 1225.8 1762.0 1227.0 C1763.3 1228.2 1762.5 1231.3 1761.0 1232.0 C1759.5 1232.7 1754.3 1231.2 1753.0 1231.0"/><path d="M1753 1318 C1754.5 1318.3 1760.7 1318.8 1762.0 1320.0 C1763.3 1321.2 1762.5 1324.3 1761.0 1325.0 C1759.5 1325.7 1754.3 1324.2 1753.0 1324.0"/><path d="M1696 1240 C1694.7 1239.7 1689.3 1237.5 1688.0 1238.0 C1686.7 1238.5 1686.7 1242.2 1688.0 1243.0 C1689.3 1243.8 1694.7 1243.0 1696.0 1243.0"/><path d="M1814 1210 C1812.7 1209.7 1807.3 1207.5 1806.0 1208.0 C1804.7 1208.5 1804.7 1212.2 1806.0 1213.0 C1807.3 1213.8 1812.7 1213.0 1814.0 1213.0"/><path d="M1992 1315 C1993.5 1315.3 1999.7 1315.8 2001.0 1317.0 C2002.3 1318.2 2001.5 1321.3 2000.0 1322.0 C1998.5 1322.7 1993.3 1321.2 1992.0 1321.0"/><path d="M2106 1305 C2107.5 1305.3 2113.7 1305.8 2115.0 1307.0 C2116.3 1308.2 2115.5 1311.3 2114.0 1312.0 C2112.5 1312.7 2107.3 1311.2 2106.0 1311.0"/><path d="M2226 1282 C2227.5 1282.3 2233.7 1282.8 2235.0 1284.0 C2236.3 1285.2 2235.5 1288.3 2234.0 1289.0 C2232.5 1289.7 2227.3 1288.2 2226.0 1288.0"/><path d="M2169 1260 C2167.7 1259.7 2162.3 1257.5 2161.0 1258.0 C2159.7 1258.5 2159.7 1262.2 2161.0 1263.0 C2162.3 1263.8 2167.7 1263.0 2169.0 1263.0"/><path d="M2049 1277 C2047.7 1276.7 2042.3 1274.5 2041.0 1275.0 C2039.7 1275.5 2039.7 1279.2 2041.0 1280.0 C2042.3 1280.8 2047.7 1280.0 2049.0 1280.0"/><path d="M1936 1290 C1934.7 1289.7 1929.3 1287.5 1928.0 1288.0 C1926.7 1288.5 1926.7 1292.2 1928.0 1293.0 C1929.3 1293.8 1934.7 1293.0 1936.0 1293.0"/><path d="M1640 890 C1653.3 908.3 1696.7 956.7 1720.0 1000.0 C1743.3 1043.3 1761.7 1089.2 1780.0 1150.0 C1798.3 1210.8 1821.7 1329.2 1830.0 1365.0"/><path d="M1640 898 C1643.3 905.0 1650.0 914.7 1660.0 940.0 C1670.0 965.3 1683.3 1006.7 1700.0 1050.0 C1716.7 1093.3 1743.3 1147.5 1760.0 1200.0 C1776.7 1252.5 1793.3 1337.5 1800.0 1365.0"/><path d="M1583 845 C1589.2 857.5 1593.8 877.5 1620.0 920.0 C1646.2 962.5 1700.0 1045.7 1740.0 1100.0 C1780.0 1154.3 1835.0 1201.8 1860.0 1246.0 C1885.0 1290.2 1885.0 1345.2 1890.0 1365.0"/><path d="M1600 960 C1608.3 971.7 1630.0 998.3 1650.0 1030.0 C1670.0 1061.7 1705.0 1094.2 1720.0 1150.0 C1735.0 1205.8 1736.7 1329.2 1740.0 1365.0"/><path d="M1700 1365 C1710.0 1337.5 1743.3 1260.8 1760.0 1200.0 C1776.7 1139.2 1790.3 1043.3 1800.0 1000.0 C1809.7 956.7 1815.0 950.0 1818.0 940.0"/><path d="M1850 1365 C1855.0 1337.5 1871.7 1260.8 1880.0 1200.0 C1888.3 1139.2 1891.7 1061.7 1900.0 1000.0 C1908.3 938.3 1921.2 870.3 1930.0 830.0 C1938.8 789.7 1949.2 770.0 1953.0 758.0"/><path d="M1870 1365 C1875.0 1337.5 1890.0 1244.2 1900.0 1200.0 C1910.0 1155.8 1920.0 1140.0 1930.0 1100.0 C1940.0 1060.0 1950.0 1001.7 1960.0 960.0 C1970.0 918.3 1982.5 880.0 1990.0 850.0 C1997.5 820.0 2005.2 797.5 2005.0 780.0 C2004.8 762.5 1991.7 750.8 1989.0 745.0"/><path d="M1720 1365 C1730.0 1345.8 1761.7 1280.8 1780.0 1250.0 C1798.3 1219.2 1801.7 1201.7 1830.0 1180.0 C1858.3 1158.3 1923.7 1134.3 1950.0 1120.0 C1976.3 1105.7 1981.7 1098.3 1988.0 1094.0"/><path d="M1500 1365 C1513.3 1349.2 1555.0 1296.7 1580.0 1270.0 C1605.0 1243.3 1621.7 1225.0 1650.0 1205.0 C1678.3 1185.0 1711.7 1169.2 1750.0 1150.0 C1788.3 1130.8 1849.8 1101.2 1880.0 1090.0 C1910.2 1078.8 1922.5 1084.2 1931.0 1083.0"/><path d="M1560 1365 C1566.7 1359.2 1585.0 1342.5 1600.0 1330.0 C1615.0 1317.5 1623.3 1306.7 1650.0 1290.0 C1676.7 1273.3 1721.7 1253.3 1760.0 1230.0 C1798.3 1206.7 1851.5 1165.0 1880.0 1150.0 C1908.5 1135.0 1922.5 1141.7 1931.0 1140.0"/><path d="M1790 1365 C1791.7 1354.2 1795.8 1315.8 1800.0 1300.0 C1804.2 1284.2 1812.5 1275.0 1815.0 1270.0"/><path d="M1950 1322 L1960 1365"/><path d="M2020 1365 C2030.0 1359.2 2066.7 1340.8 2080.0 1330.0 C2093.3 1319.2 2096.7 1305.0 2100.0 1300.0"/><path d="M2043 1040 C2040.8 1045.0 2036.3 1051.7 2030.0 1070.0 C2023.7 1088.3 2012.3 1126.7 2005.0 1150.0 C1997.7 1173.3 1989.2 1200.0 1986.0 1210.0"/><path d="M2227 1255 C2231.3 1262.5 2251.0 1281.7 2253.0 1300.0 C2255.0 1318.3 2241.3 1354.2 2239.0 1365.0"/><path d="M1861 1246 C1877.5 1257.2 1936.5 1293.2 1960.0 1313.0 C1983.5 1332.8 1995.0 1356.3 2002.0 1365.0" stroke-dasharray="5 4"/><path d="M1795 1175 C1798.3 1180.8 1809.2 1199.2 1815.0 1210.0 C1820.8 1220.8 1827.5 1235.0 1830.0 1240.0" stroke-dasharray="5 4"/><path d="M1696 1285 C1694.7 1285.8 1688.0 1287.5 1688.0 1290.0 C1688.0 1292.5 1694.7 1298.3 1696.0 1300.0" stroke-dasharray="5 4"/></g><rect x="1119.5" y="353.5" width="57" height="110.4" rx="3" fill="#fff" stroke="#8fa6e0" stroke-width="1"/><rect x="1120" y="354" width="56" height="10" rx="2" fill="#f0f3f7"/><rect x="1120" y="363.5" width="56" height="0.8" fill="#e2e7ed"/><path d="M1123.5 359 L1126 356.5 L1128.5 359 L1128.5 361 L1123.5 361Z" fill="#7f95aa"/><text x="1131" y="360.5" font-size="4.3" fill="#9fb0c2">mas01 My African Saf...</text><rect x="1124.7" y="367.1" width="2.6" height="3.8" rx="0.7" fill="#8a8a8a"/><text x="1130.5" y="370.9" font-size="3.9" fill="#6d7278">I&#39;m excited, I&#39;ve alway...</text><path d="M1125.3 379.4 L1125.3 375.8 L1127.8 375.3 L1127.8 379.0" stroke="#f25a74" stroke-width="0.7" fill="none"/><circle cx="1124.6" cy="379.4" r="0.8" fill="#f25a74"/><circle cx="1127.1" cy="379.1" r="0.8" fill="#f25a74"/><text x="1130.5" y="379.5" font-size="3.9" fill="#6d7278">masB01_african_start1....</text><rect x="1124.7" y="384.4" width="2.6" height="3.8" rx="0.7" fill="#8a8a8a"/><text x="1130.5" y="388.2" font-size="3.9" fill="#6d7278">We are in Kruger Natio...</text><rect x="1124.7" y="393.0" width="2.6" height="3.8" rx="0.7" fill="#8a8a8a"/><text x="1130.5" y="396.8" font-size="3.9" fill="#6d7278">&lt;break time="1.5s"/&gt;Wo...</text><circle cx="1126.0" cy="402.4" r="1.1" fill="#5b8ff4"/><rect x="1124.1" y="403.9" width="3.8" height="2.1" rx="0.9" fill="#5b8ff4"/><text x="1130.5" y="405.5" font-size="3.9" fill="#6d7278">bush walk</text><circle cx="1126.0" cy="411.0" r="1.1" fill="#5b8ff4"/><rect x="1124.1" y="412.5" width="3.8" height="2.1" rx="0.9" fill="#5b8ff4"/><text x="1130.5" y="414.1" font-size="3.9" fill="#6d7278">archeology site</text><circle cx="1126.0" cy="419.6" r="1.1" fill="#5b8ff4"/><rect x="1124.1" y="421.1" width="3.8" height="2.1" rx="0.9" fill="#5b8ff4"/><text x="1130.5" y="422.7" font-size="3.9" fill="#6d7278">help</text><circle cx="1126.0" cy="428.3" r="1.1" fill="#5b8ff4"/><rect x="1124.1" y="429.8" width="3.8" height="2.1" rx="0.9" fill="#5b8ff4"/><text x="1130.5" y="431.4" font-size="3.9" fill="#6d7278">stop</text><circle cx="1126.0" cy="436.9" r="1.1" fill="#5b8ff4"/><rect x="1124.1" y="438.4" width="3.8" height="2.1" rx="0.9" fill="#5b8ff4"/><text x="1130.5" y="440.0" font-size="3.9" fill="#6d7278">storyline</text><circle cx="1126.0" cy="445.6" r="1.1" fill="#5b8ff4"/><rect x="1124.1" y="447.1" width="3.8" height="2.1" rx="0.9" fill="#5b8ff4"/><text x="1130.5" y="448.7" font-size="3.9" fill="#6d7278">jump</text><path d="M1124.0 457.4 L1126.0 455.4 L1128.0 453.4 M1126.5 456.2 L1128.0 457.4" stroke="#3a5aa8" stroke-width="0.8" fill="none"/><text x="1130.5" y="457.3" font-size="3.9" fill="#6d7278">else</text><rect x="1120.5" y="506.5" width="57" height="67.2" rx="3" fill="#fff" stroke="#d9e0e8" stroke-width="1"/><rect x="1121" y="507" width="56" height="10" rx="2" fill="#f0f3f7"/><rect x="1121" y="516.5" width="56" height="0.8" fill="#e2e7ed"/><rect x="1125" y="509.5" width="4" height="4" rx="0.8" fill="none" stroke="#9aaabb" stroke-width="0.8"/><text x="1153" y="513.5" font-size="4.3" fill="#9fb0c2" text-anchor="middle">mas01 Help</text><rect x="1125.7" y="520.1" width="2.6" height="3.8" rx="0.7" fill="#8a8a8a"/><text x="1131.5" y="523.9" font-size="3.9" fill="#6d7278">The Savannah bu...</text><rect x="1125.7" y="528.7" width="2.6" height="3.8" rx="0.7" fill="#8a8a8a"/><text x="1131.5" y="532.5" font-size="3.9" fill="#6d7278">Should we be qui...</text><rect x="1125.7" y="537.4" width="2.6" height="3.8" rx="0.7" fill="#8a8a8a"/><text x="1131.5" y="541.2" font-size="3.9" fill="#6d7278">We walk into the b...</text><circle cx="1127.0" cy="546.7" r="1.1" fill="#5b8ff4"/><rect x="1125.1" y="548.2" width="3.8" height="2.1" rx="0.9" fill="#5b8ff4"/><text x="1131.5" y="549.8" font-size="3.9" fill="#6d7278">quiet</text><circle cx="1127.0" cy="555.4" r="1.1" fill="#5b8ff4"/><rect x="1125.1" y="556.9" width="3.8" height="2.1" rx="0.9" fill="#5b8ff4"/><text x="1131.5" y="558.5" font-size="3.9" fill="#6d7278">right</text><path d="M1125.0 567.2 L1127.0 565.2 L1129.0 563.2 M1127.5 566.0 L1129.0 567.2" stroke="#3a5aa8" stroke-width="0.8" fill="none"/><text x="1131.5" y="567.1" font-size="3.9" fill="#6d7278">else</text><rect x="1120.5" y="594.5" width="57" height="24.0" rx="3" fill="#fff" stroke="#d9e0e8" stroke-width="1"/><rect x="1121" y="595" width="56" height="10" rx="2" fill="#f0f3f7"/><rect x="1121" y="604.5" width="56" height="0.8" fill="#e2e7ed"/><rect x="1125" y="597.5" width="4" height="4" rx="0.8" fill="none" stroke="#9aaabb" stroke-width="0.8"/><text x="1153" y="601.5" font-size="4.3" fill="#9fb0c2" text-anchor="middle">mas01 Stop</text><rect x="1125.7" y="608.1" width="2.6" height="3.8" rx="0.7" fill="#8a8a8a"/><text x="1131.5" y="611.9" font-size="3.9" fill="#6d7278">Did you see whi...</text><rect x="1120.5" y="628.5" width="57" height="84.5" rx="3" fill="#fff" stroke="#d9e0e8" stroke-width="1"/><rect x="1121" y="629" width="56" height="10" rx="2" fill="#f0f3f7"/><rect x="1121" y="638.5" width="56" height="0.8" fill="#e2e7ed"/><rect x="1125" y="631.5" width="4" height="4" rx="0.8" fill="none" stroke="#9aaabb" stroke-width="0.8"/><text x="1153" y="635.5" font-size="4.3" fill="#9fb0c2" text-anchor="middle">mas01 storyline</text><rect x="1125.7" y="642.1" width="2.6" height="3.8" rx="0.7" fill="#8a8a8a"/><text x="1131.5" y="645.9" font-size="3.9" fill="#6d7278">&lt;break time="1.5s"/&gt;</text><path d="M1126.3 654.4 L1126.3 650.8 L1128.8 650.3 L1128.8 654.0" stroke="#f25a74" stroke-width="0.7" fill="none"/><circle cx="1125.6" cy="654.4" r="0.8" fill="#f25a74"/><circle cx="1128.1" cy="654.1" r="0.8" fill="#f25a74"/><text x="1131.5" y="654.5" font-size="3.9" fill="#6d7278">masB08_camera_c...</text><rect x="1125.7" y="659.4" width="2.6" height="3.8" rx="0.7" fill="#8a8a8a"/><text x="1131.5" y="663.2" font-size="3.9" fill="#6d7278">The Savannah bu...</text><rect x="1125.7" y="668.0" width="2.6" height="3.8" rx="0.7" fill="#8a8a8a"/><text x="1131.5" y="671.8" font-size="3.9" fill="#6d7278">You are too kind.</text><circle cx="1127.0" cy="677.4" r="1.1" fill="#5b8ff4"/><rect x="1125.1" y="678.9" width="3.8" height="2.1" rx="0.9" fill="#5b8ff4"/><text x="1131.5" y="680.5" font-size="3.9" fill="#6d7278">right</text><circle cx="1127.0" cy="686.0" r="1.1" fill="#5b8ff4"/><rect x="1125.1" y="687.5" width="3.8" height="2.1" rx="0.9" fill="#5b8ff4"/><text x="1131.5" y="689.1" font-size="3.9" fill="#6d7278">trail</text><circle cx="1127.0" cy="694.6" r="1.1" fill="#5b8ff4"/><rect x="1125.1" y="696.1" width="3.8" height="2.1" rx="0.9" fill="#5b8ff4"/><text x="1131.5" y="697.7" font-size="3.9" fill="#6d7278">left</text><path d="M1125.0 706.5 L1127.0 704.48 L1129.0 702.5 M1127.5 705.3 L1129.0 706.5" stroke="#3a5aa8" stroke-width="0.8" fill="none"/><text x="1131.5" y="706.4" font-size="3.9" fill="#6d7278">else</text><rect x="1451.5" y="356.5" width="57" height="110.4" rx="3" fill="#fff" stroke="#d9e0e8" stroke-width="1"/><rect x="1452" y="357" width="56" height="10" rx="2" fill="#f0f3f7"/><rect x="1452" y="366.5" width="56" height="0.8" fill="#e2e7ed"/><rect x="1456" y="359.5" width="4" height="4" rx="0.8" fill="none" stroke="#9aaabb" stroke-width="0.8"/><text x="1484" y="363.5" font-size="4.3" fill="#9fb0c2" text-anchor="middle">mas02 Bush Walk</text><rect x="1456.7" y="370.1" width="2.6" height="3.8" rx="0.7" fill="#8a8a8a"/><text x="1462.5" y="373.9" font-size="3.9" fill="#6d7278">Did you see whi...</text><path d="M1457.3 382.4 L1457.3 378.8 L1459.8 378.3 L1459.8 382.0" stroke="#f25a74" stroke-width="0.7" fill="none"/><circle cx="1456.6" cy="382.4" r="0.8" fill="#f25a74"/><circle cx="1459.1" cy="382.1" r="0.8" fill="#f25a74"/><text x="1462.5" y="382.5" font-size="3.9" fill="#6d7278">masB06_lion_21.mp3</text><rect x="1456.7" y="387.4" width="2.6" height="3.8" rx="0.7" fill="#8a8a8a"/><text x="1462.5" y="391.2" font-size="3.9" fill="#6d7278">There are so ma...</text><rect x="1456.7" y="396.0" width="2.6" height="3.8" rx="0.7" fill="#8a8a8a"/><text x="1462.5" y="399.8" font-size="3.9" fill="#6d7278">Something big mo...</text><path d="M1457.3 408.4 L1457.3 404.8 L1459.8 404.3 L1459.8 408.0" stroke="#f25a74" stroke-width="0.7" fill="none"/><circle cx="1456.6" cy="408.4" r="0.8" fill="#f25a74"/><circle cx="1459.1" cy="408.1" r="0.8" fill="#f25a74"/><text x="1462.5" y="408.5" font-size="3.9" fill="#6d7278">masB06_lion_21.mp3</text><rect x="1456.7" y="413.3" width="2.6" height="3.8" rx="0.7" fill="#8a8a8a"/><text x="1462.5" y="417.1" font-size="3.9" fill="#6d7278">Should we be qui...</text><path d="M1457.3 425.6 L1457.3 422.0 L1459.8 421.5 L1459.8 425.2" stroke="#f25a74" stroke-width="0.7" fill="none"/><circle cx="1456.6" cy="425.6" r="0.8" fill="#f25a74"/><circle cx="1459.1" cy="425.3" r="0.8" fill="#f25a74"/><text x="1462.5" y="425.7" font-size="3.9" fill="#6d7278">masB03_hawk.mp3</text><rect x="1456.7" y="430.6" width="2.6" height="3.8" rx="0.7" fill="#8a8a8a"/><text x="1462.5" y="434.4" font-size="3.9" fill="#6d7278">We walk into the b...</text><circle cx="1458.0" cy="439.9" r="1.1" fill="#5b8ff4"/><rect x="1456.1" y="441.4" width="3.8" height="2.1" rx="0.9" fill="#5b8ff4"/><text x="1462.5" y="443.0" font-size="3.9" fill="#6d7278">yes</text><circle cx="1458.0" cy="448.6" r="1.1" fill="#5b8ff4"/><rect x="1456.1" y="450.1" width="3.8" height="2.1" rx="0.9" fill="#5b8ff4"/><text x="1462.5" y="451.7" font-size="3.9" fill="#6d7278">right</text><path d="M1456.0 460.4 L1458.0 458.4 L1460.0 456.4 M1458.5 459.2 L1460.0 460.4" stroke="#3a5aa8" stroke-width="0.8" fill="none"/><text x="1462.5" y="460.3" font-size="3.9" fill="#6d7278">else</text><rect x="1580.5" y="354.5" width="57" height="101.8" rx="3" fill="#fff" stroke="#d9e0e8" stroke-width="1"/><rect x="1581" y="355" width="56" height="10" rx="2" fill="#f0f3f7"/><rect x="1581" y="364.5" width="56" height="0.8" fill="#e2e7ed"/><rect x="1585" y="357.5" width="4" height="4" rx="0.8" fill="none" stroke="#9aaabb" stroke-width="0.8"/><text x="1613" y="361.5" font-size="4.3" fill="#9fb0c2" text-anchor="middle">mas03 Stream</text><rect x="1585.7" y="368.1" width="2.6" height="3.8" rx="0.7" fill="#8a8a8a"/><text x="1591.5" y="371.9" font-size="3.9" fill="#6d7278">Did you see whi...</text><path d="M1586.3 380.4 L1586.3 376.8 L1588.8 376.3 L1588.8 380.0" stroke="#f25a74" stroke-width="0.7" fill="none"/><circle cx="1585.6" cy="380.4" r="0.8" fill="#f25a74"/><circle cx="1588.1" cy="380.1" r="0.8" fill="#f25a74"/><text x="1591.5" y="380.5" font-size="3.9" fill="#6d7278">masB05_rhino.mp3</text><rect x="1585.7" y="385.4" width="2.6" height="3.8" rx="0.7" fill="#8a8a8a"/><text x="1591.5" y="389.2" font-size="3.9" fill="#6d7278">Let me get this ...</text><path d="M1586.3 397.7 L1586.3 394.1 L1588.8 393.6 L1588.8 397.3" stroke="#f25a74" stroke-width="0.7" fill="none"/><circle cx="1585.6" cy="397.7" r="0.8" fill="#f25a74"/><circle cx="1588.1" cy="397.4" r="0.8" fill="#f25a74"/><text x="1591.5" y="397.8" font-size="3.9" fill="#6d7278">...bush_walk_ele...</text><rect x="1585.7" y="402.7" width="2.6" height="3.8" rx="0.7" fill="#8a8a8a"/><text x="1591.5" y="406.5" font-size="3.9" fill="#6d7278">Something big mo...</text><rect x="1585.7" y="411.3" width="2.6" height="3.8" rx="0.7" fill="#8a8a8a"/><text x="1591.5" y="415.1" font-size="3.9" fill="#6d7278">We walk into the b...</text><rect x="1585.7" y="419.9" width="2.6" height="3.8" rx="0.7" fill="#8a8a8a"/><text x="1591.5" y="423.7" font-size="3.9" fill="#6d7278">There are so ma...</text><circle cx="1587.0" cy="429.3" r="1.1" fill="#5b8ff4"/><rect x="1585.1" y="430.8" width="3.8" height="2.1" rx="0.9" fill="#5b8ff4"/><text x="1591.5" y="432.4" font-size="3.9" fill="#6d7278">help</text><circle cx="1587.0" cy="437.9" r="1.1" fill="#5b8ff4"/><rect x="1585.1" y="439.4" width="3.8" height="2.1" rx="0.9" fill="#5b8ff4"/><text x="1591.5" y="441.0" font-size="3.9" fill="#6d7278">climb</text><path d="M1585.0 449.8 L1587.0 447.76 L1589.0 445.8 M1587.5 448.6 L1589.0 449.8" stroke="#3a5aa8" stroke-width="0.8" fill="none"/><text x="1591.5" y="449.7" font-size="3.9" fill="#6d7278">else</text><rect x="1583.5" y="835.5" width="57" height="84.5" rx="3" fill="#fff" stroke="#d9e0e8" stroke-width="1"/><rect x="1584" y="836" width="56" height="10" rx="2" fill="#f0f3f7"/><rect x="1584" y="845.5" width="56" height="0.8" fill="#e2e7ed"/><rect x="1588" y="838.5" width="4" height="4" rx="0.8" fill="none" stroke="#9aaabb" stroke-width="0.8"/><text x="1616" y="842.5" font-size="4.3" fill="#9fb0c2" text-anchor="middle">mas03 Hill</text><rect x="1588.7" y="849.1" width="2.6" height="3.8" rx="0.7" fill="#8a8a8a"/><text x="1594.5" y="852.9" font-size="3.9" fill="#6d7278">There are so ma...</text><path d="M1589.3 861.4 L1589.3 857.8 L1591.8 857.3 L1591.8 861.0" stroke="#f25a74" stroke-width="0.7" fill="none"/><circle cx="1588.6" cy="861.4" r="0.8" fill="#f25a74"/><circle cx="1591.1" cy="861.1" r="0.8" fill="#f25a74"/><text x="1594.5" y="861.5" font-size="3.9" fill="#6d7278">masB03_hawk.mp3</text><rect x="1588.7" y="866.4" width="2.6" height="3.8" rx="0.7" fill="#8a8a8a"/><text x="1594.5" y="870.2" font-size="3.9" fill="#6d7278">Did you see whi...</text><path d="M1589.3 878.7 L1589.3 875.1 L1591.8 874.6 L1591.8 878.3" stroke="#f25a74" stroke-width="0.7" fill="none"/><circle cx="1588.6" cy="878.7" r="0.8" fill="#f25a74"/><circle cx="1591.1" cy="878.4" r="0.8" fill="#f25a74"/><text x="1594.5" y="878.8" font-size="3.9" fill="#6d7278">...bush_walk_ele...</text><rect x="1588.7" y="883.7" width="2.6" height="3.8" rx="0.7" fill="#8a8a8a"/><text x="1594.5" y="887.5" font-size="3.9" fill="#6d7278">Now that we are s...</text><circle cx="1590.0" cy="893.0" r="1.1" fill="#5b8ff4"/><rect x="1588.1" y="894.5" width="3.8" height="2.1" rx="0.9" fill="#5b8ff4"/><text x="1594.5" y="896.1" font-size="3.9" fill="#6d7278">yes</text><circle cx="1590.0" cy="901.6" r="1.1" fill="#5b8ff4"/><rect x="1588.1" y="903.1" width="3.8" height="2.1" rx="0.9" fill="#5b8ff4"/><text x="1594.5" y="904.7" font-size="3.9" fill="#6d7278">no</text><path d="M1588.0 913.5 L1590.0 911.48 L1592.0 909.5 M1590.5 912.3 L1592.0 913.5" stroke="#3a5aa8" stroke-width="0.8" fill="none"/><text x="1594.5" y="913.4" font-size="3.9" fill="#6d7278">else</text><rect x="1696.5" y="357.5" width="57" height="101.8" rx="3" fill="#fff" stroke="#d9e0e8" stroke-width="1"/><rect x="1697" y="358" width="56" height="10" rx="2" fill="#f0f3f7"/><rect x="1697" y="367.5" width="56" height="0.8" fill="#e2e7ed"/><rect x="1701" y="360.5" width="4" height="4" rx="0.8" fill="none" stroke="#9aaabb" stroke-width="0.8"/><text x="1729" y="364.5" font-size="4.3" fill="#9fb0c2" text-anchor="middle">mas03e Quiet</text><rect x="1701.7" y="371.1" width="2.6" height="3.8" rx="0.7" fill="#8a8a8a"/><text x="1707.5" y="374.9" font-size="3.9" fill="#6d7278">Hush, I can&#39;t be...</text><path d="M1702.3 383.4 L1702.3 379.8 L1704.8 379.3 L1704.8 383.0" stroke="#f25a74" stroke-width="0.7" fill="none"/><circle cx="1701.6" cy="383.4" r="0.8" fill="#f25a74"/><circle cx="1704.1" cy="383.1" r="0.8" fill="#f25a74"/><text x="1707.5" y="383.5" font-size="3.9" fill="#6d7278">masB08_camera_c...</text><rect x="1701.7" y="388.4" width="2.6" height="3.8" rx="0.7" fill="#8a8a8a"/><text x="1707.5" y="392.2" font-size="3.9" fill="#6d7278">Now that we are s...</text><path d="M1702.3 400.7 L1702.3 397.1 L1704.8 396.6 L1704.8 400.3" stroke="#f25a74" stroke-width="0.7" fill="none"/><circle cx="1701.6" cy="400.7" r="0.8" fill="#f25a74"/><circle cx="1704.1" cy="400.4" r="0.8" fill="#f25a74"/><text x="1707.5" y="400.8" font-size="3.9" fill="#6d7278">masB05_rhino.mp3</text><rect x="1701.7" y="405.7" width="2.6" height="3.8" rx="0.7" fill="#8a8a8a"/><text x="1707.5" y="409.5" font-size="3.9" fill="#6d7278">We walk into the b...</text><path d="M1702.3 418.0 L1702.3 414.4 L1704.8 413.9 L1704.8 417.6" stroke="#f25a74" stroke-width="0.7" fill="none"/><circle cx="1701.6" cy="418.0" r="0.8" fill="#f25a74"/><circle cx="1704.1" cy="417.7" r="0.8" fill="#f25a74"/><text x="1707.5" y="418.1" font-size="3.9" fill="#6d7278">masB05_rhino.mp3</text><rect x="1701.7" y="422.9" width="2.6" height="3.8" rx="0.7" fill="#8a8a8a"/><text x="1707.5" y="426.7" font-size="3.9" fill="#6d7278">We walk into the b...</text><circle cx="1703.0" cy="432.3" r="1.1" fill="#5b8ff4"/><rect x="1701.1" y="433.8" width="3.8" height="2.1" rx="0.9" fill="#5b8ff4"/><text x="1707.5" y="435.4" font-size="3.9" fill="#6d7278">rock art</text><circle cx="1703.0" cy="440.9" r="1.1" fill="#5b8ff4"/><rect x="1701.1" y="442.4" width="3.8" height="2.1" rx="0.9" fill="#5b8ff4"/><text x="1707.5" y="444.0" font-size="3.9" fill="#6d7278">stream</text><path d="M1701.0 452.8 L1703.0 450.76 L1705.0 448.8 M1703.5 451.6 L1705.0 452.8" stroke="#3a5aa8" stroke-width="0.8" fill="none"/><text x="1707.5" y="452.7" font-size="3.9" fill="#6d7278">else</text><rect x="1702.5" y="566.5" width="57" height="75.9" rx="3" fill="#fff" stroke="#d9e0e8" stroke-width="1"/><rect x="1703" y="567" width="56" height="10" rx="2" fill="#f0f3f7"/><rect x="1703" y="576.5" width="56" height="0.8" fill="#e2e7ed"/><rect x="1707" y="569.5" width="4" height="4" rx="0.8" fill="none" stroke="#9aaabb" stroke-width="0.8"/><text x="1735" y="573.5" font-size="4.3" fill="#9fb0c2" text-anchor="middle">mas03 Don&#39;t Move</text><rect x="1707.7" y="580.1" width="2.6" height="3.8" rx="0.7" fill="#8a8a8a"/><text x="1713.5" y="583.9" font-size="3.9" fill="#6d7278">Let me get this ...</text><rect x="1707.7" y="588.7" width="2.6" height="3.8" rx="0.7" fill="#8a8a8a"/><text x="1713.5" y="592.5" font-size="3.9" fill="#6d7278">You are too kind.</text><rect x="1707.7" y="597.4" width="2.6" height="3.8" rx="0.7" fill="#8a8a8a"/><text x="1713.5" y="601.2" font-size="3.9" fill="#6d7278">I think it&#39;s time for ...</text><rect x="1707.7" y="606.0" width="2.6" height="3.8" rx="0.7" fill="#8a8a8a"/><text x="1713.5" y="609.8" font-size="3.9" fill="#6d7278">Let me get this ...</text><circle cx="1709.0" cy="615.4" r="1.1" fill="#5b8ff4"/><rect x="1707.1" y="616.9" width="3.8" height="2.1" rx="0.9" fill="#5b8ff4"/><text x="1713.5" y="618.5" font-size="3.9" fill="#6d7278">left</text><circle cx="1709.0" cy="624.0" r="1.1" fill="#5b8ff4"/><rect x="1707.1" y="625.5" width="3.8" height="2.1" rx="0.9" fill="#5b8ff4"/><text x="1713.5" y="627.1" font-size="3.9" fill="#6d7278">no</text><path d="M1707.0 635.8 L1709.0 633.84 L1711.0 631.8 M1709.5 634.6 L1711.0 635.8" stroke="#3a5aa8" stroke-width="0.8" fill="none"/><text x="1713.5" y="635.7" font-size="3.9" fill="#6d7278">else</text><rect x="1699.5" y="837.5" width="57" height="84.5" rx="3" fill="#fff" stroke="#d9e0e8" stroke-width="1"/><rect x="1700" y="838" width="56" height="10" rx="2" fill="#f0f3f7"/><rect x="1700" y="847.5" width="56" height="0.8" fill="#e2e7ed"/><rect x="1704" y="840.5" width="4" height="4" rx="0.8" fill="none" stroke="#9aaabb" stroke-width="0.8"/><text x="1711" y="844.5" font-size="4.3" fill="#9fb0c2">mas04 Yes I feel the...</text><rect x="1704.7" y="851.1" width="2.6" height="3.8" rx="0.7" fill="#8a8a8a"/><text x="1710.5" y="854.9" font-size="3.9" fill="#6d7278">The Savannah bu...</text><path d="M1705.3 863.4 L1705.3 859.8 L1707.8 859.3 L1707.8 863.0" stroke="#f25a74" stroke-width="0.7" fill="none"/><circle cx="1704.6" cy="863.4" r="0.8" fill="#f25a74"/><circle cx="1707.1" cy="863.1" r="0.8" fill="#f25a74"/><text x="1710.5" y="863.5" font-size="3.9" fill="#6d7278">...bush_walk_ele...</text><rect x="1704.7" y="868.4" width="2.6" height="3.8" rx="0.7" fill="#8a8a8a"/><text x="1710.5" y="872.2" font-size="3.9" fill="#6d7278">I guess it is obvious ...</text><rect x="1704.7" y="877.0" width="2.6" height="3.8" rx="0.7" fill="#8a8a8a"/><text x="1710.5" y="880.8" font-size="3.9" fill="#6d7278">You are too kind.</text><rect x="1704.7" y="885.7" width="2.6" height="3.8" rx="0.7" fill="#8a8a8a"/><text x="1710.5" y="889.5" font-size="3.9" fill="#6d7278">We walk into the b...</text><circle cx="1706.0" cy="895.0" r="1.1" fill="#5b8ff4"/><rect x="1704.1" y="896.5" width="3.8" height="2.1" rx="0.9" fill="#5b8ff4"/><text x="1710.5" y="898.1" font-size="3.9" fill="#6d7278">help</text><circle cx="1706.0" cy="903.6" r="1.1" fill="#5b8ff4"/><rect x="1704.1" y="905.1" width="3.8" height="2.1" rx="0.9" fill="#5b8ff4"/><text x="1710.5" y="906.7" font-size="3.9" fill="#6d7278">trail</text><path d="M1704.0 915.5 L1706.0 913.48 L1708.0 911.5 M1706.5 914.3 L1708.0 915.5" stroke="#3a5aa8" stroke-width="0.8" fill="none"/><text x="1710.5" y="915.4" font-size="3.9" fill="#6d7278">else</text><rect x="1696.5" y="1153.5" width="57" height="119.1" rx="3" fill="#fff" stroke="#d9e0e8" stroke-width="1"/><rect x="1697" y="1154" width="56" height="10" rx="2" fill="#f0f3f7"/><rect x="1697" y="1163.5" width="56" height="0.8" fill="#e2e7ed"/><rect x="1701" y="1156.5" width="4" height="4" rx="0.8" fill="none" stroke="#9aaabb" stroke-width="0.8"/><text x="1708" y="1160.5" font-size="4.3" fill="#9fb0c2">mas04 No I have to b...</text><rect x="1701.7" y="1167.1" width="2.6" height="3.8" rx="0.7" fill="#8a8a8a"/><text x="1707.5" y="1170.9" font-size="3.9" fill="#6d7278">Do you want to fo...</text><path d="M1702.3 1179.4 L1702.3 1175.8 L1704.8 1175.3 L1704.8 1179.0" stroke="#f25a74" stroke-width="0.7" fill="none"/><circle cx="1701.6" cy="1179.4" r="0.8" fill="#f25a74"/><circle cx="1704.1" cy="1179.1" r="0.8" fill="#f25a74"/><text x="1707.5" y="1179.5" font-size="3.9" fill="#6d7278">masB06_lion_21.mp3</text><rect x="1701.7" y="1184.4" width="2.6" height="3.8" rx="0.7" fill="#8a8a8a"/><text x="1707.5" y="1188.2" font-size="3.9" fill="#6d7278">Did you see whi...</text><path d="M1702.3 1196.7 L1702.3 1193.1 L1704.8 1192.6 L1704.8 1196.3" stroke="#f25a74" stroke-width="0.7" fill="none"/><circle cx="1701.6" cy="1196.7" r="0.8" fill="#f25a74"/><circle cx="1704.1" cy="1196.4" r="0.8" fill="#f25a74"/><text x="1707.5" y="1196.8" font-size="3.9" fill="#6d7278">masB08_camera_c...</text><rect x="1701.7" y="1201.7" width="2.6" height="3.8" rx="0.7" fill="#8a8a8a"/><text x="1707.5" y="1205.5" font-size="3.9" fill="#6d7278">I guess it is obvious ...</text><path d="M1702.3 1214.0 L1702.3 1210.4 L1704.8 1209.9 L1704.8 1213.6" stroke="#f25a74" stroke-width="0.7" fill="none"/><circle cx="1701.6" cy="1214.0" r="0.8" fill="#f25a74"/><circle cx="1704.1" cy="1213.7" r="0.8" fill="#f25a74"/><text x="1707.5" y="1214.1" font-size="3.9" fill="#6d7278">masB03_hawk.mp3</text><rect x="1701.7" y="1218.9" width="2.6" height="3.8" rx="0.7" fill="#8a8a8a"/><text x="1707.5" y="1222.7" font-size="3.9" fill="#6d7278">Do you want to fo...</text><rect x="1701.7" y="1227.6" width="2.6" height="3.8" rx="0.7" fill="#8a8a8a"/><text x="1707.5" y="1231.4" font-size="3.9" fill="#6d7278">I guess it is obvious ...</text><rect x="1701.7" y="1236.2" width="2.6" height="3.8" rx="0.7" fill="#8a8a8a"/><text x="1707.5" y="1240.0" font-size="3.9" fill="#6d7278">Now that we are s...</text><circle cx="1703.0" cy="1245.6" r="1.1" fill="#5b8ff4"/><rect x="1701.1" y="1247.1" width="3.8" height="2.1" rx="0.9" fill="#5b8ff4"/><text x="1707.5" y="1248.7" font-size="3.9" fill="#6d7278">water</text><circle cx="1703.0" cy="1254.2" r="1.1" fill="#5b8ff4"/><rect x="1701.1" y="1255.7" width="3.8" height="2.1" rx="0.9" fill="#5b8ff4"/><text x="1707.5" y="1257.3" font-size="3.9" fill="#6d7278">stream</text><path d="M1701.0 1266.0 L1703.0 1264.04 L1705.0 1262.0 M1703.5 1264.8 L1705.0 1266.0" stroke="#3a5aa8" stroke-width="0.8" fill="none"/><text x="1707.5" y="1265.9" font-size="3.9" fill="#6d7278">else</text><rect x="1696.5" y="1271.5" width="57" height="84.5" rx="3" fill="#fff" stroke="#d9e0e8" stroke-width="1"/><rect x="1697" y="1272" width="56" height="10" rx="2" fill="#f0f3f7"/><rect x="1697" y="1281.5" width="56" height="0.8" fill="#e2e7ed"/><rect x="1701" y="1274.5" width="4" height="4" rx="0.8" fill="none" stroke="#9aaabb" stroke-width="0.8"/><text x="1708" y="1278.5" font-size="4.3" fill="#9fb0c2">mas05 No, I have no...</text><rect x="1701.7" y="1285.1" width="2.6" height="3.8" rx="0.7" fill="#8a8a8a"/><text x="1707.5" y="1288.9" font-size="3.9" fill="#6d7278">Our guides are ha...</text><path d="M1702.3 1297.4 L1702.3 1293.8 L1704.8 1293.3 L1704.8 1297.0" stroke="#f25a74" stroke-width="0.7" fill="none"/><circle cx="1701.6" cy="1297.4" r="0.8" fill="#f25a74"/><circle cx="1704.1" cy="1297.1" r="0.8" fill="#f25a74"/><text x="1707.5" y="1297.5" font-size="3.9" fill="#6d7278">masB05_rhino.mp3</text><rect x="1701.7" y="1302.4" width="2.6" height="3.8" rx="0.7" fill="#8a8a8a"/><text x="1707.5" y="1306.2" font-size="3.9" fill="#6d7278">I think it&#39;s time for ...</text><rect x="1701.7" y="1311.0" width="2.6" height="3.8" rx="0.7" fill="#8a8a8a"/><text x="1707.5" y="1314.8" font-size="3.9" fill="#6d7278">Hush, I can&#39;t be...</text><rect x="1701.7" y="1319.7" width="2.6" height="3.8" rx="0.7" fill="#8a8a8a"/><text x="1707.5" y="1323.5" font-size="3.9" fill="#6d7278">The Savannah bu...</text><circle cx="1703.0" cy="1329.0" r="1.1" fill="#5b8ff4"/><rect x="1701.1" y="1330.5" width="3.8" height="2.1" rx="0.9" fill="#5b8ff4"/><text x="1707.5" y="1332.1" font-size="3.9" fill="#6d7278">look up</text><circle cx="1703.0" cy="1337.6" r="1.1" fill="#5b8ff4"/><rect x="1701.1" y="1339.1" width="3.8" height="2.1" rx="0.9" fill="#5b8ff4"/><text x="1707.5" y="1340.7" font-size="3.9" fill="#6d7278">trail</text><path d="M1701.0 1349.5 L1703.0 1347.48 L1705.0 1345.5 M1703.5 1348.3 L1705.0 1349.5" stroke="#3a5aa8" stroke-width="0.8" fill="none"/><text x="1707.5" y="1349.4" font-size="3.9" fill="#6d7278">else</text><rect x="1823.5" y="357.5" width="57" height="67.2" rx="3" fill="#fff" stroke="#d9e0e8" stroke-width="1"/><rect x="1824" y="358" width="56" height="10" rx="2" fill="#f0f3f7"/><rect x="1824" y="367.5" width="56" height="0.8" fill="#e2e7ed"/><rect x="1828" y="360.5" width="4" height="4" rx="0.8" fill="none" stroke="#9aaabb" stroke-width="0.8"/><text x="1835" y="364.5" font-size="4.3" fill="#9fb0c2">mas04 Stay on Trail</text><rect x="1828.7" y="371.1" width="2.6" height="3.8" rx="0.7" fill="#8a8a8a"/><text x="1834.5" y="374.9" font-size="3.9" fill="#6d7278">You are too kind.</text><rect x="1828.7" y="379.7" width="2.6" height="3.8" rx="0.7" fill="#8a8a8a"/><text x="1834.5" y="383.5" font-size="3.9" fill="#6d7278">You are too kind.</text><rect x="1828.7" y="388.4" width="2.6" height="3.8" rx="0.7" fill="#8a8a8a"/><text x="1834.5" y="392.2" font-size="3.9" fill="#6d7278">Now that we are s...</text><circle cx="1830.0" cy="397.7" r="1.1" fill="#5b8ff4"/><rect x="1828.1" y="399.2" width="3.8" height="2.1" rx="0.9" fill="#5b8ff4"/><text x="1834.5" y="400.8" font-size="3.9" fill="#6d7278">quiet</text><circle cx="1830.0" cy="406.4" r="1.1" fill="#5b8ff4"/><rect x="1828.1" y="407.9" width="3.8" height="2.1" rx="0.9" fill="#5b8ff4"/><text x="1834.5" y="409.5" font-size="3.9" fill="#6d7278">right</text><path d="M1828.0 418.2 L1830.0 416.2 L1832.0 414.2 M1830.5 417.0 L1832.0 418.2" stroke="#3a5aa8" stroke-width="0.8" fill="none"/><text x="1834.5" y="418.1" font-size="3.9" fill="#6d7278">else</text><rect x="1823.5" y="428.5" width="57" height="119.1" rx="3" fill="#fff" stroke="#d9e0e8" stroke-width="1"/><rect x="1824" y="429" width="56" height="10" rx="2" fill="#f0f3f7"/><rect x="1824" y="438.5" width="56" height="0.8" fill="#e2e7ed"/><rect x="1828" y="431.5" width="4" height="4" rx="0.8" fill="none" stroke="#9aaabb" stroke-width="0.8"/><text x="1835" y="435.5" font-size="4.3" fill="#9fb0c2">mas04 Jump in Water</text><path d="M1829.3 445.8 L1829.3 442.2 L1831.8 441.7 L1831.8 445.4" stroke="#f25a74" stroke-width="0.7" fill="none"/><circle cx="1828.6" cy="445.8" r="0.8" fill="#f25a74"/><circle cx="1831.1" cy="445.5" r="0.8" fill="#f25a74"/><text x="1834.5" y="445.9" font-size="3.9" fill="#6d7278">masB04_bird_song.mp3</text><rect x="1828.7" y="450.7" width="2.6" height="3.8" rx="0.7" fill="#8a8a8a"/><text x="1834.5" y="454.5" font-size="3.9" fill="#6d7278">Something big mo...</text><rect x="1828.7" y="459.4" width="2.6" height="3.8" rx="0.7" fill="#8a8a8a"/><text x="1834.5" y="463.2" font-size="3.9" fill="#6d7278">Hush, I can&#39;t be...</text><path d="M1829.3 471.7 L1829.3 468.1 L1831.8 467.6 L1831.8 471.3" stroke="#f25a74" stroke-width="0.7" fill="none"/><circle cx="1828.6" cy="471.7" r="0.8" fill="#f25a74"/><circle cx="1831.1" cy="471.4" r="0.8" fill="#f25a74"/><text x="1834.5" y="471.8" font-size="3.9" fill="#6d7278">masB03_hawk.mp3</text><rect x="1828.7" y="476.7" width="2.6" height="3.8" rx="0.7" fill="#8a8a8a"/><text x="1834.5" y="480.5" font-size="3.9" fill="#6d7278">Our guides are ha...</text><path d="M1829.3 489.0 L1829.3 485.4 L1831.8 484.9 L1831.8 488.6" stroke="#f25a74" stroke-width="0.7" fill="none"/><circle cx="1828.6" cy="489.0" r="0.8" fill="#f25a74"/><circle cx="1831.1" cy="488.7" r="0.8" fill="#f25a74"/><text x="1834.5" y="489.1" font-size="3.9" fill="#6d7278">masB04_bird_song.mp3</text><rect x="1828.7" y="493.9" width="2.6" height="3.8" rx="0.7" fill="#8a8a8a"/><text x="1834.5" y="497.7" font-size="3.9" fill="#6d7278">&lt;break time="1.5s"/&gt;</text><rect x="1828.7" y="502.6" width="2.6" height="3.8" rx="0.7" fill="#8a8a8a"/><text x="1834.5" y="506.4" font-size="3.9" fill="#6d7278">Our guides are ha...</text><rect x="1828.7" y="511.2" width="2.6" height="3.8" rx="0.7" fill="#8a8a8a"/><text x="1834.5" y="515.0" font-size="3.9" fill="#6d7278">Should we be qui...</text><circle cx="1830.0" cy="520.6" r="1.1" fill="#5b8ff4"/><rect x="1828.1" y="522.1" width="3.8" height="2.1" rx="0.9" fill="#5b8ff4"/><text x="1834.5" y="523.7" font-size="3.9" fill="#6d7278">quiet</text><circle cx="1830.0" cy="529.2" r="1.1" fill="#5b8ff4"/><rect x="1828.1" y="530.7" width="3.8" height="2.1" rx="0.9" fill="#5b8ff4"/><text x="1834.5" y="532.3" font-size="3.9" fill="#6d7278">look up</text><path d="M1828.0 541.0 L1830.0 539.04 L1832.0 537.0 M1830.5 539.8 L1832.0 541.0" stroke="#3a5aa8" stroke-width="0.8" fill="none"/><text x="1834.5" y="540.9" font-size="3.9" fill="#6d7278">else</text><rect x="1823.5" y="565.5" width="57" height="110.4" rx="3" fill="#fff" stroke="#d9e0e8" stroke-width="1"/><rect x="1824" y="566" width="56" height="10" rx="2" fill="#f0f3f7"/><rect x="1824" y="575.5" width="56" height="0.8" fill="#e2e7ed"/><rect x="1828" y="568.5" width="4" height="4" rx="0.8" fill="none" stroke="#9aaabb" stroke-width="0.8"/><text x="1835" y="572.5" font-size="4.3" fill="#9fb0c2">mas04 Yes, I&#39;m feeli...</text><rect x="1828.7" y="579.1" width="2.6" height="3.8" rx="0.7" fill="#8a8a8a"/><text x="1834.5" y="582.9" font-size="3.9" fill="#6d7278">I think it&#39;s time for ...</text><rect x="1828.7" y="587.7" width="2.6" height="3.8" rx="0.7" fill="#8a8a8a"/><text x="1834.5" y="591.5" font-size="3.9" fill="#6d7278">I think it&#39;s time for ...</text><rect x="1828.7" y="596.4" width="2.6" height="3.8" rx="0.7" fill="#8a8a8a"/><text x="1834.5" y="600.2" font-size="3.9" fill="#6d7278">&lt;break time="1.5s"/&gt;</text><path d="M1829.3 608.7 L1829.3 605.1 L1831.8 604.6 L1831.8 608.3" stroke="#f25a74" stroke-width="0.7" fill="none"/><circle cx="1828.6" cy="608.7" r="0.8" fill="#f25a74"/><circle cx="1831.1" cy="608.4" r="0.8" fill="#f25a74"/><text x="1834.5" y="608.8" font-size="3.9" fill="#6d7278">masB05_rhino.mp3</text><rect x="1828.7" y="613.7" width="2.6" height="3.8" rx="0.7" fill="#8a8a8a"/><text x="1834.5" y="617.5" font-size="3.9" fill="#6d7278">Now that we are s...</text><path d="M1829.3 626.0 L1829.3 622.4 L1831.8 621.9 L1831.8 625.6" stroke="#f25a74" stroke-width="0.7" fill="none"/><circle cx="1828.6" cy="626.0" r="0.8" fill="#f25a74"/><circle cx="1831.1" cy="625.7" r="0.8" fill="#f25a74"/><text x="1834.5" y="626.1" font-size="3.9" fill="#6d7278">...bush_walk_ele...</text><rect x="1828.7" y="630.9" width="2.6" height="3.8" rx="0.7" fill="#8a8a8a"/><text x="1834.5" y="634.7" font-size="3.9" fill="#6d7278">Do you want to fo...</text><rect x="1828.7" y="639.6" width="2.6" height="3.8" rx="0.7" fill="#8a8a8a"/><text x="1834.5" y="643.4" font-size="3.9" fill="#6d7278">Hush, I can&#39;t be...</text><circle cx="1830.0" cy="648.9" r="1.1" fill="#5b8ff4"/><rect x="1828.1" y="650.4" width="3.8" height="2.1" rx="0.9" fill="#5b8ff4"/><text x="1834.5" y="652.0" font-size="3.9" fill="#6d7278">stream</text><circle cx="1830.0" cy="657.6" r="1.1" fill="#5b8ff4"/><rect x="1828.1" y="659.1" width="3.8" height="2.1" rx="0.9" fill="#5b8ff4"/><text x="1834.5" y="660.7" font-size="3.9" fill="#6d7278">rock art</text><path d="M1828.0 669.4 L1830.0 667.4 L1832.0 665.4 M1830.5 668.2 L1832.0 669.4" stroke="#3a5aa8" stroke-width="0.8" fill="none"/><text x="1834.5" y="669.3" font-size="3.9" fill="#6d7278">else</text><rect x="1823.5" y="691.5" width="57" height="84.5" rx="3" fill="#fff" stroke="#d9e0e8" stroke-width="1"/><rect x="1824" y="692" width="56" height="10" rx="2" fill="#f0f3f7"/><rect x="1824" y="701.5" width="56" height="0.8" fill="#e2e7ed"/><rect x="1828" y="694.5" width="4" height="4" rx="0.8" fill="none" stroke="#9aaabb" stroke-width="0.8"/><text x="1835" y="698.5" font-size="4.3" fill="#9fb0c2">mas04 No, I haven&#39;t...</text><rect x="1828.7" y="705.1" width="2.6" height="3.8" rx="0.7" fill="#8a8a8a"/><text x="1834.5" y="708.9" font-size="3.9" fill="#6d7278">Our guides are ha...</text><rect x="1828.7" y="713.7" width="2.6" height="3.8" rx="0.7" fill="#8a8a8a"/><text x="1834.5" y="717.5" font-size="3.9" fill="#6d7278">I think it&#39;s time for ...</text><rect x="1828.7" y="722.4" width="2.6" height="3.8" rx="0.7" fill="#8a8a8a"/><text x="1834.5" y="726.2" font-size="3.9" fill="#6d7278">Our guides are ha...</text><rect x="1828.7" y="731.0" width="2.6" height="3.8" rx="0.7" fill="#8a8a8a"/><text x="1834.5" y="734.8" font-size="3.9" fill="#6d7278">There are so ma...</text><rect x="1828.7" y="739.7" width="2.6" height="3.8" rx="0.7" fill="#8a8a8a"/><text x="1834.5" y="743.5" font-size="3.9" fill="#6d7278">We walk into the b...</text><circle cx="1830.0" cy="749.0" r="1.1" fill="#5b8ff4"/><rect x="1828.1" y="750.5" width="3.8" height="2.1" rx="0.9" fill="#5b8ff4"/><text x="1834.5" y="752.1" font-size="3.9" fill="#6d7278">stream</text><circle cx="1830.0" cy="757.6" r="1.1" fill="#5b8ff4"/><rect x="1828.1" y="759.1" width="3.8" height="2.1" rx="0.9" fill="#5b8ff4"/><text x="1834.5" y="760.7" font-size="3.9" fill="#6d7278">climb</text><path d="M1828.0 769.5 L1830.0 767.48 L1832.0 765.5 M1830.5 768.3 L1832.0 769.5" stroke="#3a5aa8" stroke-width="0.8" fill="none"/><text x="1834.5" y="769.4" font-size="3.9" fill="#6d7278">else</text><rect x="1818.5" y="838.5" width="57" height="101.8" rx="3" fill="#fff" stroke="#d9e0e8" stroke-width="1"/><rect x="1819" y="839" width="56" height="10" rx="2" fill="#f0f3f7"/><rect x="1819" y="848.5" width="56" height="0.8" fill="#e2e7ed"/><rect x="1823" y="841.5" width="4" height="4" rx="0.8" fill="none" stroke="#9aaabb" stroke-width="0.8"/><text x="1830" y="845.5" font-size="4.3" fill="#9fb0c2">mas05 Yes I have bin...</text><path d="M1824.3 855.8 L1824.3 852.2 L1826.8 851.7 L1826.8 855.4" stroke="#f25a74" stroke-width="0.7" fill="none"/><circle cx="1823.6" cy="855.8" r="0.8" fill="#f25a74"/><circle cx="1826.1" cy="855.5" r="0.8" fill="#f25a74"/><text x="1829.5" y="855.9" font-size="3.9" fill="#6d7278">...bush_walk_ele...</text><rect x="1823.7" y="860.7" width="2.6" height="3.8" rx="0.7" fill="#8a8a8a"/><text x="1829.5" y="864.5" font-size="3.9" fill="#6d7278">Hush, I can&#39;t be...</text><path d="M1824.3 873.1 L1824.3 869.5 L1826.8 869.0 L1826.8 872.7" stroke="#f25a74" stroke-width="0.7" fill="none"/><circle cx="1823.6" cy="873.1" r="0.8" fill="#f25a74"/><circle cx="1826.1" cy="872.8" r="0.8" fill="#f25a74"/><text x="1829.5" y="873.2" font-size="3.9" fill="#6d7278">masB04_bird_song.mp3</text><rect x="1823.7" y="878.0" width="2.6" height="3.8" rx="0.7" fill="#8a8a8a"/><text x="1829.5" y="881.8" font-size="3.9" fill="#6d7278">Should we be qui...</text><path d="M1824.3 890.4 L1824.3 886.8 L1826.8 886.3 L1826.8 890.0" stroke="#f25a74" stroke-width="0.7" fill="none"/><circle cx="1823.6" cy="890.4" r="0.8" fill="#f25a74"/><circle cx="1826.1" cy="890.1" r="0.8" fill="#f25a74"/><text x="1829.5" y="890.5" font-size="3.9" fill="#6d7278">masB05_rhino.mp3</text><rect x="1823.7" y="895.3" width="2.6" height="3.8" rx="0.7" fill="#8a8a8a"/><text x="1829.5" y="899.1" font-size="3.9" fill="#6d7278">Should we be qui...</text><rect x="1823.7" y="903.9" width="2.6" height="3.8" rx="0.7" fill="#8a8a8a"/><text x="1829.5" y="907.7" font-size="3.9" fill="#6d7278">Now that we are s...</text><circle cx="1825.0" cy="913.3" r="1.1" fill="#5b8ff4"/><rect x="1823.1" y="914.8" width="3.8" height="2.1" rx="0.9" fill="#5b8ff4"/><text x="1829.5" y="916.4" font-size="3.9" fill="#6d7278">rock art</text><circle cx="1825.0" cy="921.9" r="1.1" fill="#5b8ff4"/><rect x="1823.1" y="923.4" width="3.8" height="2.1" rx="0.9" fill="#5b8ff4"/><text x="1829.5" y="925.0" font-size="3.9" fill="#6d7278">yes</text><path d="M1823.0 933.8 L1825.0 931.76 L1827.0 929.8 M1825.5 932.6 L1827.0 933.8" stroke="#3a5aa8" stroke-width="0.8" fill="none"/><text x="1829.5" y="933.7" font-size="3.9" fill="#6d7278">else</text><rect x="1819.5" y="982.5" width="57" height="93.2" rx="3" fill="#fff" stroke="#d9e0e8" stroke-width="1"/><rect x="1820" y="983" width="56" height="10" rx="2" fill="#f0f3f7"/><rect x="1820" y="992.5" width="56" height="0.8" fill="#e2e7ed"/><rect x="1824" y="985.5" width="4" height="4" rx="0.8" fill="none" stroke="#9aaabb" stroke-width="0.8"/><text x="1831" y="989.5" font-size="4.3" fill="#9fb0c2">mas05 No I don&#39;t hav...</text><path d="M1825.3 999.8 L1825.3 996.2 L1827.8 995.7 L1827.8 999.4" stroke="#f25a74" stroke-width="0.7" fill="none"/><circle cx="1824.6" cy="999.8" r="0.8" fill="#f25a74"/><circle cx="1827.1" cy="999.5" r="0.8" fill="#f25a74"/><text x="1830.5" y="999.9" font-size="3.9" fill="#6d7278">masB05_rhino.mp3</text><path d="M1825.3 1008.4 L1825.3 1004.8 L1827.8 1004.3 L1827.8 1008.0" stroke="#f25a74" stroke-width="0.7" fill="none"/><circle cx="1824.6" cy="1008.4" r="0.8" fill="#f25a74"/><circle cx="1827.1" cy="1008.1" r="0.8" fill="#f25a74"/><text x="1830.5" y="1008.5" font-size="3.9" fill="#6d7278">masB04_bird_song.mp3</text><rect x="1824.7" y="1013.4" width="2.6" height="3.8" rx="0.7" fill="#8a8a8a"/><text x="1830.5" y="1017.2" font-size="3.9" fill="#6d7278">I think it&#39;s time for ...</text><path d="M1825.3 1025.7 L1825.3 1022.1 L1827.8 1021.6 L1827.8 1025.3" stroke="#f25a74" stroke-width="0.7" fill="none"/><circle cx="1824.6" cy="1025.7" r="0.8" fill="#f25a74"/><circle cx="1827.1" cy="1025.4" r="0.8" fill="#f25a74"/><text x="1830.5" y="1025.8" font-size="3.9" fill="#6d7278">masB08_camera_c...</text><rect x="1824.7" y="1030.7" width="2.6" height="3.8" rx="0.7" fill="#8a8a8a"/><text x="1830.5" y="1034.5" font-size="3.9" fill="#6d7278">I think it&#39;s time for ...</text><rect x="1824.7" y="1039.3" width="2.6" height="3.8" rx="0.7" fill="#8a8a8a"/><text x="1830.5" y="1043.1" font-size="3.9" fill="#6d7278">I guess it is obvious ...</text><circle cx="1826.0" cy="1048.6" r="1.1" fill="#5b8ff4"/><rect x="1824.1" y="1050.1" width="3.8" height="2.1" rx="0.9" fill="#5b8ff4"/><text x="1830.5" y="1051.7" font-size="3.9" fill="#6d7278">right</text><circle cx="1826.0" cy="1057.3" r="1.1" fill="#5b8ff4"/><rect x="1824.1" y="1058.8" width="3.8" height="2.1" rx="0.9" fill="#5b8ff4"/><text x="1830.5" y="1060.4" font-size="3.9" fill="#6d7278">right</text><path d="M1824.0 1069.1 L1826.0 1067.12 L1828.0 1065.1 M1826.5 1067.9 L1828.0 1069.1" stroke="#3a5aa8" stroke-width="0.8" fill="none"/><text x="1830.5" y="1069.0" font-size="3.9" fill="#6d7278">else</text><rect x="1814.5" y="1153.5" width="57" height="93.2" rx="3" fill="#fff" stroke="#d9e0e8" stroke-width="1"/><rect x="1815" y="1154" width="56" height="10" rx="2" fill="#f0f3f7"/><rect x="1815" y="1163.5" width="56" height="0.8" fill="#e2e7ed"/><rect x="1819" y="1156.5" width="4" height="4" rx="0.8" fill="none" stroke="#9aaabb" stroke-width="0.8"/><text x="1847" y="1160.5" font-size="4.3" fill="#9fb0c2" text-anchor="middle">mas05 Hill</text><rect x="1819.7" y="1167.1" width="2.6" height="3.8" rx="0.7" fill="#8a8a8a"/><text x="1825.5" y="1170.9" font-size="3.9" fill="#6d7278">Should we be qui...</text><rect x="1819.7" y="1175.7" width="2.6" height="3.8" rx="0.7" fill="#8a8a8a"/><text x="1825.5" y="1179.5" font-size="3.9" fill="#6d7278">Our guides are ha...</text><rect x="1819.7" y="1184.4" width="2.6" height="3.8" rx="0.7" fill="#8a8a8a"/><text x="1825.5" y="1188.2" font-size="3.9" fill="#6d7278">I think it&#39;s time for ...</text><path d="M1820.3 1196.7 L1820.3 1193.1 L1822.8 1192.6 L1822.8 1196.3" stroke="#f25a74" stroke-width="0.7" fill="none"/><circle cx="1819.6" cy="1196.7" r="0.8" fill="#f25a74"/><circle cx="1822.1" cy="1196.4" r="0.8" fill="#f25a74"/><text x="1825.5" y="1196.8" font-size="3.9" fill="#6d7278">masB03_hawk.mp3</text><rect x="1819.7" y="1201.7" width="2.6" height="3.8" rx="0.7" fill="#8a8a8a"/><text x="1825.5" y="1205.5" font-size="3.9" fill="#6d7278">&lt;break time="1.5s"/&gt;</text><rect x="1819.7" y="1210.3" width="2.6" height="3.8" rx="0.7" fill="#8a8a8a"/><text x="1825.5" y="1214.1" font-size="3.9" fill="#6d7278">Should we be qui...</text><circle cx="1821.0" cy="1219.6" r="1.1" fill="#5b8ff4"/><rect x="1819.1" y="1221.1" width="3.8" height="2.1" rx="0.9" fill="#5b8ff4"/><text x="1825.5" y="1222.7" font-size="3.9" fill="#6d7278">left</text><circle cx="1821.0" cy="1228.3" r="1.1" fill="#5b8ff4"/><rect x="1819.1" y="1229.8" width="3.8" height="2.1" rx="0.9" fill="#5b8ff4"/><text x="1825.5" y="1231.4" font-size="3.9" fill="#6d7278">look up</text><path d="M1819.0 1240.1 L1821.0 1238.12 L1823.0 1236.1 M1821.5 1238.9 L1823.0 1240.1" stroke="#3a5aa8" stroke-width="0.8" fill="none"/><text x="1825.5" y="1240.0" font-size="3.9" fill="#6d7278">else</text><rect x="1816.5" y="1260.5" width="57" height="50.0" rx="3" fill="#fff" stroke="#d9e0e8" stroke-width="1"/><rect x="1817" y="1261" width="56" height="10" rx="2" fill="#f0f3f7"/><rect x="1817" y="1270.5" width="56" height="0.8" fill="#e2e7ed"/><rect x="1821" y="1263.5" width="4" height="4" rx="0.8" fill="none" stroke="#9aaabb" stroke-width="0.8"/><text x="1849" y="1267.5" font-size="4.3" fill="#9fb0c2" text-anchor="middle">mas06 Lion</text><rect x="1821.7" y="1274.1" width="2.6" height="3.8" rx="0.7" fill="#8a8a8a"/><text x="1827.5" y="1277.9" font-size="3.9" fill="#6d7278">We walk into the b...</text><circle cx="1823.0" cy="1283.4" r="1.1" fill="#5b8ff4"/><rect x="1821.1" y="1284.9" width="3.8" height="2.1" rx="0.9" fill="#5b8ff4"/><text x="1827.5" y="1286.5" font-size="3.9" fill="#6d7278">rock art</text><circle cx="1823.0" cy="1292.1" r="1.1" fill="#5b8ff4"/><rect x="1821.1" y="1293.6" width="3.8" height="2.1" rx="0.9" fill="#5b8ff4"/><text x="1827.5" y="1295.2" font-size="3.9" fill="#6d7278">help</text><path d="M1821.0 1303.9 L1823.0 1301.92 L1825.0 1299.9 M1823.5 1302.7 L1825.0 1303.9" stroke="#3a5aa8" stroke-width="0.8" fill="none"/><text x="1827.5" y="1303.8" font-size="3.9" fill="#6d7278">else</text><rect x="1930.5" y="358.5" width="57" height="75.9" rx="3" fill="#fff" stroke="#d9e0e8" stroke-width="1"/><rect x="1931" y="359" width="56" height="10" rx="2" fill="#f0f3f7"/><rect x="1931" y="368.5" width="56" height="0.8" fill="#e2e7ed"/><rect x="1935" y="361.5" width="4" height="4" rx="0.8" fill="none" stroke="#9aaabb" stroke-width="0.8"/><text x="1942" y="365.5" font-size="4.3" fill="#9fb0c2">mas05 Yes I want to...</text><rect x="1935.7" y="372.1" width="2.6" height="3.8" rx="0.7" fill="#8a8a8a"/><text x="1941.5" y="375.9" font-size="3.9" fill="#6d7278">We walk into the b...</text><rect x="1935.7" y="380.7" width="2.6" height="3.8" rx="0.7" fill="#8a8a8a"/><text x="1941.5" y="384.5" font-size="3.9" fill="#6d7278">Something big mo...</text><rect x="1935.7" y="389.4" width="2.6" height="3.8" rx="0.7" fill="#8a8a8a"/><text x="1941.5" y="393.2" font-size="3.9" fill="#6d7278">Our guides are ha...</text><rect x="1935.7" y="398.0" width="2.6" height="3.8" rx="0.7" fill="#8a8a8a"/><text x="1941.5" y="401.8" font-size="3.9" fill="#6d7278">Let me get this ...</text><circle cx="1937.0" cy="407.4" r="1.1" fill="#5b8ff4"/><rect x="1935.1" y="408.9" width="3.8" height="2.1" rx="0.9" fill="#5b8ff4"/><text x="1941.5" y="410.5" font-size="3.9" fill="#6d7278">look up</text><circle cx="1937.0" cy="416.0" r="1.1" fill="#5b8ff4"/><rect x="1935.1" y="417.5" width="3.8" height="2.1" rx="0.9" fill="#5b8ff4"/><text x="1941.5" y="419.1" font-size="3.9" fill="#6d7278">water</text><path d="M1935.0 427.8 L1937.0 425.84000000000003 L1939.0 423.8 M1937.5 426.6 L1939.0 427.8" stroke="#3a5aa8" stroke-width="0.8" fill="none"/><text x="1941.5" y="427.7" font-size="3.9" fill="#6d7278">else</text><rect x="1930.5" y="443.5" width="57" height="84.5" rx="3" fill="#fff" stroke="#d9e0e8" stroke-width="1"/><rect x="1931" y="444" width="56" height="10" rx="2" fill="#f0f3f7"/><rect x="1931" y="453.5" width="56" height="0.8" fill="#e2e7ed"/><rect x="1935" y="446.5" width="4" height="4" rx="0.8" fill="none" stroke="#9aaabb" stroke-width="0.8"/><text x="1942" y="450.5" font-size="4.3" fill="#9fb0c2">mas05 No, you go fir...</text><rect x="1935.7" y="457.1" width="2.6" height="3.8" rx="0.7" fill="#8a8a8a"/><text x="1941.5" y="460.9" font-size="3.9" fill="#6d7278">Now that we are s...</text><rect x="1935.7" y="465.7" width="2.6" height="3.8" rx="0.7" fill="#8a8a8a"/><text x="1941.5" y="469.5" font-size="3.9" fill="#6d7278">I think it&#39;s time for ...</text><rect x="1935.7" y="474.4" width="2.6" height="3.8" rx="0.7" fill="#8a8a8a"/><text x="1941.5" y="478.2" font-size="3.9" fill="#6d7278">Do you want to fo...</text><rect x="1935.7" y="483.0" width="2.6" height="3.8" rx="0.7" fill="#8a8a8a"/><text x="1941.5" y="486.8" font-size="3.9" fill="#6d7278">Our guides are ha...</text><rect x="1935.7" y="491.7" width="2.6" height="3.8" rx="0.7" fill="#8a8a8a"/><text x="1941.5" y="495.5" font-size="3.9" fill="#6d7278">&lt;break time="1.5s"/&gt;</text><circle cx="1937.0" cy="501.0" r="1.1" fill="#5b8ff4"/><rect x="1935.1" y="502.5" width="3.8" height="2.1" rx="0.9" fill="#5b8ff4"/><text x="1941.5" y="504.1" font-size="3.9" fill="#6d7278">rock art</text><circle cx="1937.0" cy="509.6" r="1.1" fill="#5b8ff4"/><rect x="1935.1" y="511.1" width="3.8" height="2.1" rx="0.9" fill="#5b8ff4"/><text x="1941.5" y="512.7" font-size="3.9" fill="#6d7278">left</text><path d="M1935.0 521.5 L1937.0 519.48 L1939.0 517.5 M1937.5 520.3 L1939.0 521.5" stroke="#3a5aa8" stroke-width="0.8" fill="none"/><text x="1941.5" y="521.4" font-size="3.9" fill="#6d7278">else</text><rect x="1932.5" y="608.5" width="57" height="67.2" rx="3" fill="#fff" stroke="#d9e0e8" stroke-width="1"/><rect x="1933" y="609" width="56" height="10" rx="2" fill="#f0f3f7"/><rect x="1933" y="618.5" width="56" height="0.8" fill="#e2e7ed"/><rect x="1937" y="611.5" width="4" height="4" rx="0.8" fill="none" stroke="#9aaabb" stroke-width="0.8"/><text x="1965" y="615.5" font-size="4.3" fill="#9fb0c2" text-anchor="middle">mas05 Yes</text><rect x="1937.7" y="622.1" width="2.6" height="3.8" rx="0.7" fill="#8a8a8a"/><text x="1943.5" y="625.9" font-size="3.9" fill="#6d7278">Should we be qui...</text><rect x="1937.7" y="630.7" width="2.6" height="3.8" rx="0.7" fill="#8a8a8a"/><text x="1943.5" y="634.5" font-size="3.9" fill="#6d7278">Our guides are ha...</text><rect x="1937.7" y="639.4" width="2.6" height="3.8" rx="0.7" fill="#8a8a8a"/><text x="1943.5" y="643.2" font-size="3.9" fill="#6d7278">Should we be qui...</text><circle cx="1939.0" cy="648.7" r="1.1" fill="#5b8ff4"/><rect x="1937.1" y="650.2" width="3.8" height="2.1" rx="0.9" fill="#5b8ff4"/><text x="1943.5" y="651.8" font-size="3.9" fill="#6d7278">trail</text><circle cx="1939.0" cy="657.4" r="1.1" fill="#5b8ff4"/><rect x="1937.1" y="658.9" width="3.8" height="2.1" rx="0.9" fill="#5b8ff4"/><text x="1943.5" y="660.5" font-size="3.9" fill="#6d7278">water</text><path d="M1937.0 669.2 L1939.0 667.2 L1941.0 665.2 M1939.5 668.0 L1941.0 669.2" stroke="#3a5aa8" stroke-width="0.8" fill="none"/><text x="1943.5" y="669.1" font-size="3.9" fill="#6d7278">else</text><rect x="1932.5" y="683.5" width="57" height="75.9" rx="3" fill="#fff" stroke="#d9e0e8" stroke-width="1"/><rect x="1933" y="684" width="56" height="10" rx="2" fill="#f0f3f7"/><rect x="1933" y="693.5" width="56" height="0.8" fill="#e2e7ed"/><rect x="1937" y="686.5" width="4" height="4" rx="0.8" fill="none" stroke="#9aaabb" stroke-width="0.8"/><text x="1965" y="690.5" font-size="4.3" fill="#9fb0c2" text-anchor="middle">mas05 No</text><rect x="1937.7" y="697.1" width="2.6" height="3.8" rx="0.7" fill="#8a8a8a"/><text x="1943.5" y="700.9" font-size="3.9" fill="#6d7278">We outrun the rh...</text><rect x="1937.7" y="705.7" width="2.6" height="3.8" rx="0.7" fill="#8a8a8a"/><text x="1943.5" y="709.5" font-size="3.9" fill="#6d7278">Did you see whi...</text><rect x="1937.7" y="714.4" width="2.6" height="3.8" rx="0.7" fill="#8a8a8a"/><text x="1943.5" y="718.2" font-size="3.9" fill="#6d7278">The Savannah bu...</text><rect x="1937.7" y="723.0" width="2.6" height="3.8" rx="0.7" fill="#8a8a8a"/><text x="1943.5" y="726.8" font-size="3.9" fill="#6d7278">Let me get this ...</text><circle cx="1939.0" cy="732.4" r="1.1" fill="#5b8ff4"/><rect x="1937.1" y="733.9" width="3.8" height="2.1" rx="0.9" fill="#5b8ff4"/><text x="1943.5" y="735.5" font-size="3.9" fill="#6d7278">water</text><circle cx="1939.0" cy="741.0" r="1.1" fill="#5b8ff4"/><rect x="1937.1" y="742.5" width="3.8" height="2.1" rx="0.9" fill="#5b8ff4"/><text x="1943.5" y="744.1" font-size="3.9" fill="#6d7278">trail</text><path d="M1937.0 752.8 L1939.0 750.84 L1941.0 748.8 M1939.5 751.6 L1941.0 752.8" stroke="#3a5aa8" stroke-width="0.8" fill="none"/><text x="1943.5" y="752.7" font-size="3.9" fill="#6d7278">else</text><rect x="1929.5" y="980.5" width="57" height="84.5" rx="3" fill="#fff" stroke="#d9e0e8" stroke-width="1"/><rect x="1930" y="981" width="56" height="10" rx="2" fill="#f0f3f7"/><rect x="1930" y="990.5" width="56" height="0.8" fill="#e2e7ed"/><rect x="1934" y="983.5" width="4" height="4" rx="0.8" fill="none" stroke="#9aaabb" stroke-width="0.8"/><text x="1941" y="987.5" font-size="4.3" fill="#9fb0c2">mas06 Yes I&#39;m flappi...</text><rect x="1934.7" y="994.1" width="2.6" height="3.8" rx="0.7" fill="#8a8a8a"/><text x="1940.5" y="997.9" font-size="3.9" fill="#6d7278">Do you want to fo...</text><path d="M1935.3 1006.4 L1935.3 1002.8 L1937.8 1002.3 L1937.8 1006.0" stroke="#f25a74" stroke-width="0.7" fill="none"/><circle cx="1934.6" cy="1006.4" r="0.8" fill="#f25a74"/><circle cx="1937.1" cy="1006.1" r="0.8" fill="#f25a74"/><text x="1940.5" y="1006.5" font-size="3.9" fill="#6d7278">masB04_bird_song.mp3</text><rect x="1934.7" y="1011.4" width="2.6" height="3.8" rx="0.7" fill="#8a8a8a"/><text x="1940.5" y="1015.2" font-size="3.9" fill="#6d7278">Our guides are ha...</text><rect x="1934.7" y="1020.0" width="2.6" height="3.8" rx="0.7" fill="#8a8a8a"/><text x="1940.5" y="1023.8" font-size="3.9" fill="#6d7278">Something big mo...</text><rect x="1934.7" y="1028.7" width="2.6" height="3.8" rx="0.7" fill="#8a8a8a"/><text x="1940.5" y="1032.5" font-size="3.9" fill="#6d7278">Our guides are ha...</text><circle cx="1936.0" cy="1038.0" r="1.1" fill="#5b8ff4"/><rect x="1934.1" y="1039.5" width="3.8" height="2.1" rx="0.9" fill="#5b8ff4"/><text x="1940.5" y="1041.1" font-size="3.9" fill="#6d7278">left</text><circle cx="1936.0" cy="1046.6" r="1.1" fill="#5b8ff4"/><rect x="1934.1" y="1048.1" width="3.8" height="2.1" rx="0.9" fill="#5b8ff4"/><text x="1940.5" y="1049.7" font-size="3.9" fill="#6d7278">left</text><path d="M1934.0 1058.5 L1936.0 1056.48 L1938.0 1054.5 M1936.5 1057.3 L1938.0 1058.5" stroke="#3a5aa8" stroke-width="0.8" fill="none"/><text x="1940.5" y="1058.4" font-size="3.9" fill="#6d7278">else</text><rect x="1931.5" y="1074.5" width="57" height="67.2" rx="3" fill="#fff" stroke="#d9e0e8" stroke-width="1"/><rect x="1932" y="1075" width="56" height="10" rx="2" fill="#f0f3f7"/><rect x="1932" y="1084.5" width="56" height="0.8" fill="#e2e7ed"/><rect x="1936" y="1077.5" width="4" height="4" rx="0.8" fill="none" stroke="#9aaabb" stroke-width="0.8"/><text x="1943" y="1081.5" font-size="4.3" fill="#9fb0c2">mas06 No I&#39;m not fla...</text><rect x="1936.7" y="1088.1" width="2.6" height="3.8" rx="0.7" fill="#8a8a8a"/><text x="1942.5" y="1091.9" font-size="3.9" fill="#6d7278">&lt;break time="1.5s"/&gt;</text><rect x="1936.7" y="1096.7" width="2.6" height="3.8" rx="0.7" fill="#8a8a8a"/><text x="1942.5" y="1100.5" font-size="3.9" fill="#6d7278">The Savannah bu...</text><rect x="1936.7" y="1105.4" width="2.6" height="3.8" rx="0.7" fill="#8a8a8a"/><text x="1942.5" y="1109.2" font-size="3.9" fill="#6d7278">Now that we are s...</text><circle cx="1938.0" cy="1114.7" r="1.1" fill="#5b8ff4"/><rect x="1936.1" y="1116.2" width="3.8" height="2.1" rx="0.9" fill="#5b8ff4"/><text x="1942.5" y="1117.8" font-size="3.9" fill="#6d7278">no</text><circle cx="1938.0" cy="1123.4" r="1.1" fill="#5b8ff4"/><rect x="1936.1" y="1124.9" width="3.8" height="2.1" rx="0.9" fill="#5b8ff4"/><text x="1942.5" y="1126.5" font-size="3.9" fill="#6d7278">trail</text><path d="M1936.0 1135.2 L1938.0 1133.2 L1940.0 1131.2 M1938.5 1134.0 L1940.0 1135.2" stroke="#3a5aa8" stroke-width="0.8" fill="none"/><text x="1942.5" y="1135.1" font-size="3.9" fill="#6d7278">else</text><rect x="1936.5" y="1212.5" width="57" height="110.4" rx="3" fill="#fff" stroke="#d9e0e8" stroke-width="1"/><rect x="1937" y="1213" width="56" height="10" rx="2" fill="#f0f3f7"/><rect x="1937" y="1222.5" width="56" height="0.8" fill="#e2e7ed"/><rect x="1941" y="1215.5" width="4" height="4" rx="0.8" fill="none" stroke="#9aaabb" stroke-width="0.8"/><text x="1948" y="1219.5" font-size="4.3" fill="#9fb0c2">mas06 Yes follow in...</text><rect x="1941.7" y="1226.1" width="2.6" height="3.8" rx="0.7" fill="#8a8a8a"/><text x="1947.5" y="1229.9" font-size="3.9" fill="#6d7278">I guess it is obvious ...</text><path d="M1942.3 1238.4 L1942.3 1234.8 L1944.8 1234.3 L1944.8 1238.0" stroke="#f25a74" stroke-width="0.7" fill="none"/><circle cx="1941.6" cy="1238.4" r="0.8" fill="#f25a74"/><circle cx="1944.1" cy="1238.1" r="0.8" fill="#f25a74"/><text x="1947.5" y="1238.5" font-size="3.9" fill="#6d7278">...bush_walk_ele...</text><rect x="1941.7" y="1243.4" width="2.6" height="3.8" rx="0.7" fill="#8a8a8a"/><text x="1947.5" y="1247.2" font-size="3.9" fill="#6d7278">&lt;break time="1.5s"/&gt;</text><rect x="1941.7" y="1252.0" width="2.6" height="3.8" rx="0.7" fill="#8a8a8a"/><text x="1947.5" y="1255.8" font-size="3.9" fill="#6d7278">Let me get this ...</text><path d="M1942.3 1264.4 L1942.3 1260.8 L1944.8 1260.3 L1944.8 1264.0" stroke="#f25a74" stroke-width="0.7" fill="none"/><circle cx="1941.6" cy="1264.4" r="0.8" fill="#f25a74"/><circle cx="1944.1" cy="1264.1" r="0.8" fill="#f25a74"/><text x="1947.5" y="1264.5" font-size="3.9" fill="#6d7278">masB03_hawk.mp3</text><rect x="1941.7" y="1269.3" width="2.6" height="3.8" rx="0.7" fill="#8a8a8a"/><text x="1947.5" y="1273.1" font-size="3.9" fill="#6d7278">Let me get this ...</text><rect x="1941.7" y="1277.9" width="2.6" height="3.8" rx="0.7" fill="#8a8a8a"/><text x="1947.5" y="1281.7" font-size="3.9" fill="#6d7278">Should we be qui...</text><rect x="1941.7" y="1286.6" width="2.6" height="3.8" rx="0.7" fill="#8a8a8a"/><text x="1947.5" y="1290.4" font-size="3.9" fill="#6d7278">Let me get this ...</text><circle cx="1943.0" cy="1295.9" r="1.1" fill="#5b8ff4"/><rect x="1941.1" y="1297.4" width="3.8" height="2.1" rx="0.9" fill="#5b8ff4"/><text x="1947.5" y="1299.0" font-size="3.9" fill="#6d7278">trail</text><circle cx="1943.0" cy="1304.6" r="1.1" fill="#5b8ff4"/><rect x="1941.1" y="1306.1" width="3.8" height="2.1" rx="0.9" fill="#5b8ff4"/><text x="1947.5" y="1307.7" font-size="3.9" fill="#6d7278">help</text><path d="M1941.0 1316.4 L1943.0 1314.4 L1945.0 1312.4 M1943.5 1315.2 L1945.0 1316.4" stroke="#3a5aa8" stroke-width="0.8" fill="none"/><text x="1947.5" y="1316.3" font-size="3.9" fill="#6d7278">else</text><rect x="1932.5" y="1338.5" width="57" height="75.9" rx="3" fill="#fff" stroke="#d9e0e8" stroke-width="1"/><rect x="1933" y="1339" width="56" height="10" rx="2" fill="#f0f3f7"/><rect x="1933" y="1348.5" width="56" height="0.8" fill="#e2e7ed"/><rect x="1937" y="1341.5" width="4" height="4" rx="0.8" fill="none" stroke="#9aaabb" stroke-width="0.8"/><text x="1944" y="1345.5" font-size="4.3" fill="#9fb0c2">mas06 No, don&#39;t kno...</text><rect x="1937.7" y="1352.1" width="2.6" height="3.8" rx="0.7" fill="#8a8a8a"/><text x="1943.5" y="1355.9" font-size="3.9" fill="#6d7278">I guess it is obvious ...</text><rect x="1937.7" y="1360.7" width="2.6" height="3.8" rx="0.7" fill="#8a8a8a"/><text x="1943.5" y="1364.5" font-size="3.9" fill="#6d7278">We outrun the rh...</text><rect x="1937.7" y="1369.4" width="2.6" height="3.8" rx="0.7" fill="#8a8a8a"/><text x="1943.5" y="1373.2" font-size="3.9" fill="#6d7278">Should we be qui...</text><rect x="1937.7" y="1378.0" width="2.6" height="3.8" rx="0.7" fill="#8a8a8a"/><text x="1943.5" y="1381.8" font-size="3.9" fill="#6d7278">Do you want to fo...</text><circle cx="1939.0" cy="1387.4" r="1.1" fill="#5b8ff4"/><rect x="1937.1" y="1388.9" width="3.8" height="2.1" rx="0.9" fill="#5b8ff4"/><text x="1943.5" y="1390.5" font-size="3.9" fill="#6d7278">no</text><circle cx="1939.0" cy="1396.0" r="1.1" fill="#5b8ff4"/><rect x="1937.1" y="1397.5" width="3.8" height="2.1" rx="0.9" fill="#5b8ff4"/><text x="1943.5" y="1399.1" font-size="3.9" fill="#6d7278">help</text><path d="M1937.0 1407.8 L1939.0 1405.84 L1941.0 1403.8 M1939.5 1406.6 L1941.0 1407.8" stroke="#3a5aa8" stroke-width="0.8" fill="none"/><text x="1943.5" y="1407.7" font-size="3.9" fill="#6d7278">else</text><rect x="2043.5" y="1030.5" width="57" height="110.4" rx="3" fill="#fff" stroke="#d9e0e8" stroke-width="1"/><rect x="2044" y="1031" width="56" height="10" rx="2" fill="#f0f3f7"/><rect x="2044" y="1040.5" width="56" height="0.8" fill="#e2e7ed"/><rect x="2048" y="1033.5" width="4" height="4" rx="0.8" fill="none" stroke="#9aaabb" stroke-width="0.8"/><text x="2076" y="1037.5" font-size="4.3" fill="#9fb0c2" text-anchor="middle">mas07 Yes</text><rect x="2048.7" y="1044.1" width="2.6" height="3.8" rx="0.7" fill="#8a8a8a"/><text x="2054.5" y="1047.9" font-size="3.9" fill="#6d7278">We walk into the b...</text><path d="M2049.3 1056.4 L2049.3 1052.8 L2051.8 1052.3 L2051.8 1056.0" stroke="#f25a74" stroke-width="0.7" fill="none"/><circle cx="2048.6" cy="1056.4" r="0.8" fill="#f25a74"/><circle cx="2051.1" cy="1056.1" r="0.8" fill="#f25a74"/><text x="2054.5" y="1056.5" font-size="3.9" fill="#6d7278">masB04_bird_song.mp3</text><rect x="2048.7" y="1061.4" width="2.6" height="3.8" rx="0.7" fill="#8a8a8a"/><text x="2054.5" y="1065.2" font-size="3.9" fill="#6d7278">We walk into the b...</text><path d="M2049.3 1073.7 L2049.3 1070.1 L2051.8 1069.6 L2051.8 1073.3" stroke="#f25a74" stroke-width="0.7" fill="none"/><circle cx="2048.6" cy="1073.7" r="0.8" fill="#f25a74"/><circle cx="2051.1" cy="1073.4" r="0.8" fill="#f25a74"/><text x="2054.5" y="1073.8" font-size="3.9" fill="#6d7278">masB08_camera_c...</text><rect x="2048.7" y="1078.7" width="2.6" height="3.8" rx="0.7" fill="#8a8a8a"/><text x="2054.5" y="1082.5" font-size="3.9" fill="#6d7278">&lt;break time="1.5s"/&gt;</text><rect x="2048.7" y="1087.3" width="2.6" height="3.8" rx="0.7" fill="#8a8a8a"/><text x="2054.5" y="1091.1" font-size="3.9" fill="#6d7278">I think it&#39;s time for ...</text><rect x="2048.7" y="1095.9" width="2.6" height="3.8" rx="0.7" fill="#8a8a8a"/><text x="2054.5" y="1099.7" font-size="3.9" fill="#6d7278">We outrun the rh...</text><rect x="2048.7" y="1104.6" width="2.6" height="3.8" rx="0.7" fill="#8a8a8a"/><text x="2054.5" y="1108.4" font-size="3.9" fill="#6d7278">Let me get this ...</text><circle cx="2050.0" cy="1113.9" r="1.1" fill="#5b8ff4"/><rect x="2048.1" y="1115.4" width="3.8" height="2.1" rx="0.9" fill="#5b8ff4"/><text x="2054.5" y="1117.0" font-size="3.9" fill="#6d7278">rock art</text><circle cx="2050.0" cy="1122.6" r="1.1" fill="#5b8ff4"/><rect x="2048.1" y="1124.1" width="3.8" height="2.1" rx="0.9" fill="#5b8ff4"/><text x="2054.5" y="1125.7" font-size="3.9" fill="#6d7278">quiet</text><path d="M2048.0 1134.4 L2050.0 1132.4 L2052.0 1130.4 M2050.5 1133.2 L2052.0 1134.4" stroke="#3a5aa8" stroke-width="0.8" fill="none"/><text x="2054.5" y="1134.3" font-size="3.9" fill="#6d7278">else</text><rect x="2049.5" y="1210.5" width="57" height="101.8" rx="3" fill="#fff" stroke="#d9e0e8" stroke-width="1"/><rect x="2050" y="1211" width="56" height="10" rx="2" fill="#f0f3f7"/><rect x="2050" y="1220.5" width="56" height="0.8" fill="#e2e7ed"/><rect x="2054" y="1213.5" width="4" height="4" rx="0.8" fill="none" stroke="#9aaabb" stroke-width="0.8"/><text x="2061" y="1217.5" font-size="4.3" fill="#9fb0c2">mas07 Yes take a sel...</text><rect x="2054.7" y="1224.1" width="2.6" height="3.8" rx="0.7" fill="#8a8a8a"/><text x="2060.5" y="1227.9" font-size="3.9" fill="#6d7278">Something big mo...</text><path d="M2055.3 1236.4 L2055.3 1232.8 L2057.8 1232.3 L2057.8 1236.0" stroke="#f25a74" stroke-width="0.7" fill="none"/><circle cx="2054.6" cy="1236.4" r="0.8" fill="#f25a74"/><circle cx="2057.1" cy="1236.1" r="0.8" fill="#f25a74"/><text x="2060.5" y="1236.5" font-size="3.9" fill="#6d7278">masB04_bird_song.mp3</text><rect x="2054.7" y="1241.4" width="2.6" height="3.8" rx="0.7" fill="#8a8a8a"/><text x="2060.5" y="1245.2" font-size="3.9" fill="#6d7278">Did you see whi...</text><path d="M2055.3 1253.7 L2055.3 1250.1 L2057.8 1249.6 L2057.8 1253.3" stroke="#f25a74" stroke-width="0.7" fill="none"/><circle cx="2054.6" cy="1253.7" r="0.8" fill="#f25a74"/><circle cx="2057.1" cy="1253.4" r="0.8" fill="#f25a74"/><text x="2060.5" y="1253.8" font-size="3.9" fill="#6d7278">masB05_rhino.mp3</text><rect x="2054.7" y="1258.7" width="2.6" height="3.8" rx="0.7" fill="#8a8a8a"/><text x="2060.5" y="1262.5" font-size="3.9" fill="#6d7278">Did you see whi...</text><path d="M2055.3 1271.0 L2055.3 1267.4 L2057.8 1266.9 L2057.8 1270.6" stroke="#f25a74" stroke-width="0.7" fill="none"/><circle cx="2054.6" cy="1271.0" r="0.8" fill="#f25a74"/><circle cx="2057.1" cy="1270.7" r="0.8" fill="#f25a74"/><text x="2060.5" y="1271.1" font-size="3.9" fill="#6d7278">...bush_walk_ele...</text><rect x="2054.7" y="1275.9" width="2.6" height="3.8" rx="0.7" fill="#8a8a8a"/><text x="2060.5" y="1279.7" font-size="3.9" fill="#6d7278">We walk into the b...</text><circle cx="2056.0" cy="1285.3" r="1.1" fill="#5b8ff4"/><rect x="2054.1" y="1286.8" width="3.8" height="2.1" rx="0.9" fill="#5b8ff4"/><text x="2060.5" y="1288.4" font-size="3.9" fill="#6d7278">climb</text><circle cx="2056.0" cy="1293.9" r="1.1" fill="#5b8ff4"/><rect x="2054.1" y="1295.4" width="3.8" height="2.1" rx="0.9" fill="#5b8ff4"/><text x="2060.5" y="1297.0" font-size="3.9" fill="#6d7278">climb</text><path d="M2054.0 1305.8 L2056.0 1303.76 L2058.0 1301.8 M2056.5 1304.6 L2058.0 1305.8" stroke="#3a5aa8" stroke-width="0.8" fill="none"/><text x="2060.5" y="1305.7" font-size="3.9" fill="#6d7278">else</text><rect x="2049.5" y="1317.5" width="57" height="84.5" rx="3" fill="#fff" stroke="#d9e0e8" stroke-width="1"/><rect x="2050" y="1318" width="56" height="10" rx="2" fill="#f0f3f7"/><rect x="2050" y="1327.5" width="56" height="0.8" fill="#e2e7ed"/><rect x="2054" y="1320.5" width="4" height="4" rx="0.8" fill="none" stroke="#9aaabb" stroke-width="0.8"/><text x="2061" y="1324.5" font-size="4.3" fill="#9fb0c2">mas07 No, don&#39;t take...</text><rect x="2054.7" y="1331.1" width="2.6" height="3.8" rx="0.7" fill="#8a8a8a"/><text x="2060.5" y="1334.9" font-size="3.9" fill="#6d7278">Let me get this ...</text><path d="M2055.3 1343.4 L2055.3 1339.8 L2057.8 1339.3 L2057.8 1343.0" stroke="#f25a74" stroke-width="0.7" fill="none"/><circle cx="2054.6" cy="1343.4" r="0.8" fill="#f25a74"/><circle cx="2057.1" cy="1343.1" r="0.8" fill="#f25a74"/><text x="2060.5" y="1343.5" font-size="3.9" fill="#6d7278">masB08_camera_c...</text><rect x="2054.7" y="1348.4" width="2.6" height="3.8" rx="0.7" fill="#8a8a8a"/><text x="2060.5" y="1352.2" font-size="3.9" fill="#6d7278">You are too kind.</text><path d="M2055.3 1360.7 L2055.3 1357.1 L2057.8 1356.6 L2057.8 1360.3" stroke="#f25a74" stroke-width="0.7" fill="none"/><circle cx="2054.6" cy="1360.7" r="0.8" fill="#f25a74"/><circle cx="2057.1" cy="1360.4" r="0.8" fill="#f25a74"/><text x="2060.5" y="1360.8" font-size="3.9" fill="#6d7278">masB06_lion_21.mp3</text><rect x="2054.7" y="1365.7" width="2.6" height="3.8" rx="0.7" fill="#8a8a8a"/><text x="2060.5" y="1369.5" font-size="3.9" fill="#6d7278">There are so ma...</text><circle cx="2056.0" cy="1375.0" r="1.1" fill="#5b8ff4"/><rect x="2054.1" y="1376.5" width="3.8" height="2.1" rx="0.9" fill="#5b8ff4"/><text x="2060.5" y="1378.1" font-size="3.9" fill="#6d7278">no</text><circle cx="2056.0" cy="1383.6" r="1.1" fill="#5b8ff4"/><rect x="2054.1" y="1385.1" width="3.8" height="2.1" rx="0.9" fill="#5b8ff4"/><text x="2060.5" y="1386.7" font-size="3.9" fill="#6d7278">right</text><path d="M2054.0 1395.5 L2056.0 1393.48 L2058.0 1391.5 M2056.5 1394.3 L2058.0 1395.5" stroke="#3a5aa8" stroke-width="0.8" fill="none"/><text x="2060.5" y="1395.4" font-size="3.9" fill="#6d7278">else</text><rect x="2169.5" y="1171.5" width="57" height="119.1" rx="3" fill="#fff" stroke="#d9e0e8" stroke-width="1"/><rect x="2170" y="1172" width="56" height="10" rx="2" fill="#f0f3f7"/><rect x="2170" y="1181.5" width="56" height="0.8" fill="#e2e7ed"/><rect x="2174" y="1174.5" width="4" height="4" rx="0.8" fill="none" stroke="#9aaabb" stroke-width="0.8"/><text x="2181" y="1178.5" font-size="4.3" fill="#9fb0c2">mas08 Yes you heard...</text><rect x="2174.7" y="1185.1" width="2.6" height="3.8" rx="0.7" fill="#8a8a8a"/><text x="2180.5" y="1188.9" font-size="3.9" fill="#6d7278">We walk into the b...</text><path d="M2175.3 1197.4 L2175.3 1193.8 L2177.8 1193.3 L2177.8 1197.0" stroke="#f25a74" stroke-width="0.7" fill="none"/><circle cx="2174.6" cy="1197.4" r="0.8" fill="#f25a74"/><circle cx="2177.1" cy="1197.1" r="0.8" fill="#f25a74"/><text x="2180.5" y="1197.5" font-size="3.9" fill="#6d7278">...bush_walk_ele...</text><rect x="2174.7" y="1202.4" width="2.6" height="3.8" rx="0.7" fill="#8a8a8a"/><text x="2180.5" y="1206.2" font-size="3.9" fill="#6d7278">Something big mo...</text><path d="M2175.3 1214.7 L2175.3 1211.1 L2177.8 1210.6 L2177.8 1214.3" stroke="#f25a74" stroke-width="0.7" fill="none"/><circle cx="2174.6" cy="1214.7" r="0.8" fill="#f25a74"/><circle cx="2177.1" cy="1214.4" r="0.8" fill="#f25a74"/><text x="2180.5" y="1214.8" font-size="3.9" fill="#6d7278">masB04_bird_song.mp3</text><rect x="2174.7" y="1219.7" width="2.6" height="3.8" rx="0.7" fill="#8a8a8a"/><text x="2180.5" y="1223.5" font-size="3.9" fill="#6d7278">We outrun the rh...</text><path d="M2175.3 1232.0 L2175.3 1228.4 L2177.8 1227.9 L2177.8 1231.6" stroke="#f25a74" stroke-width="0.7" fill="none"/><circle cx="2174.6" cy="1232.0" r="0.8" fill="#f25a74"/><circle cx="2177.1" cy="1231.7" r="0.8" fill="#f25a74"/><text x="2180.5" y="1232.1" font-size="3.9" fill="#6d7278">masB04_bird_song.mp3</text><rect x="2174.7" y="1236.9" width="2.6" height="3.8" rx="0.7" fill="#8a8a8a"/><text x="2180.5" y="1240.7" font-size="3.9" fill="#6d7278">Now that we are s...</text><rect x="2174.7" y="1245.6" width="2.6" height="3.8" rx="0.7" fill="#8a8a8a"/><text x="2180.5" y="1249.4" font-size="3.9" fill="#6d7278">We walk into the b...</text><rect x="2174.7" y="1254.2" width="2.6" height="3.8" rx="0.7" fill="#8a8a8a"/><text x="2180.5" y="1258.0" font-size="3.9" fill="#6d7278">The Savannah bu...</text><circle cx="2176.0" cy="1263.6" r="1.1" fill="#5b8ff4"/><rect x="2174.1" y="1265.1" width="3.8" height="2.1" rx="0.9" fill="#5b8ff4"/><text x="2180.5" y="1266.7" font-size="3.9" fill="#6d7278">rock art</text><circle cx="2176.0" cy="1272.2" r="1.1" fill="#5b8ff4"/><rect x="2174.1" y="1273.7" width="3.8" height="2.1" rx="0.9" fill="#5b8ff4"/><text x="2180.5" y="1275.3" font-size="3.9" fill="#6d7278">quiet</text><path d="M2174.0 1284.0 L2176.0 1282.04 L2178.0 1280.0 M2176.5 1282.8 L2178.0 1284.0" stroke="#3a5aa8" stroke-width="0.8" fill="none"/><text x="2180.5" y="1283.9" font-size="3.9" fill="#6d7278">else</text><rect x="2169.5" y="1317.5" width="57" height="75.9" rx="3" fill="#fff" stroke="#d9e0e8" stroke-width="1"/><rect x="2170" y="1318" width="56" height="10" rx="2" fill="#f0f3f7"/><rect x="2170" y="1327.5" width="56" height="0.8" fill="#e2e7ed"/><rect x="2174" y="1320.5" width="4" height="4" rx="0.8" fill="none" stroke="#9aaabb" stroke-width="0.8"/><text x="2181" y="1324.5" font-size="4.3" fill="#9fb0c2">mas08 No, the lion d...</text><path d="M2175.3 1334.8 L2175.3 1331.2 L2177.8 1330.7 L2177.8 1334.4" stroke="#f25a74" stroke-width="0.7" fill="none"/><circle cx="2174.6" cy="1334.8" r="0.8" fill="#f25a74"/><circle cx="2177.1" cy="1334.5" r="0.8" fill="#f25a74"/><text x="2180.5" y="1334.9" font-size="3.9" fill="#6d7278">...bush_walk_ele...</text><rect x="2174.7" y="1339.7" width="2.6" height="3.8" rx="0.7" fill="#8a8a8a"/><text x="2180.5" y="1343.5" font-size="3.9" fill="#6d7278">We walk into the b...</text><path d="M2175.3 1352.1 L2175.3 1348.5 L2177.8 1348.0 L2177.8 1351.7" stroke="#f25a74" stroke-width="0.7" fill="none"/><circle cx="2174.6" cy="1352.1" r="0.8" fill="#f25a74"/><circle cx="2177.1" cy="1351.8" r="0.8" fill="#f25a74"/><text x="2180.5" y="1352.2" font-size="3.9" fill="#6d7278">masB03_hawk.mp3</text><rect x="2174.7" y="1357.0" width="2.6" height="3.8" rx="0.7" fill="#8a8a8a"/><text x="2180.5" y="1360.8" font-size="3.9" fill="#6d7278">I guess it is obvious ...</text><circle cx="2176.0" cy="1366.4" r="1.1" fill="#5b8ff4"/><rect x="2174.1" y="1367.9" width="3.8" height="2.1" rx="0.9" fill="#5b8ff4"/><text x="2180.5" y="1369.5" font-size="3.9" fill="#6d7278">stream</text><circle cx="2176.0" cy="1375.0" r="1.1" fill="#5b8ff4"/><rect x="2174.1" y="1376.5" width="3.8" height="2.1" rx="0.9" fill="#5b8ff4"/><text x="2180.5" y="1378.1" font-size="3.9" fill="#6d7278">no</text><path d="M2174.0 1386.8 L2176.0 1384.84 L2178.0 1382.8 M2176.5 1385.6 L2178.0 1386.8" stroke="#3a5aa8" stroke-width="0.8" fill="none"/><text x="2180.5" y="1386.7" font-size="3.9" fill="#6d7278">else</text></svg><div class="a" style="left:106px;top:351px;width:692px;height:986px;background:#fff;border:1.5px solid #97abb7;border-radius:15px;overflow:hidden;box-shadow:0 3px 8px rgba(40,60,80,0.06)"><div class="a" style="left:0;top:0;width:690px;height:69px;background:#f0f4f6;border-bottom:1.5px solid #97abb7"></div><div class="a" style="left:0;top:913px;width:690px;height:1px;background:#dde5ec"></div></div><div class="a" style="left:128px;top:442px;width:634px;height:98px;background:#f4f9fc;border-radius:9px"></div><div class="t" style="left:300px;top:375.9px;font-size:25.5px;color:#869db2;font-weight:normal;letter-spacing:0.68px;-webkit-text-stroke:0.45px #869db2">mas01 My African Safari</div><svg class="a" style="left:0;top:0" width="900" height="1400"><path d="M131 384 L140.8 375.8 L150.8 384 Q151.6 384.7 151.6 385.8 L151.6 395.8 Q151.6 397 150.4 397 L145.5 397 L145.5 391.5 Q145.5 388.6 140.8 388.6 Q136.1 388.6 136.1 391.5 L136.1 397 L131.2 397 Q130 397 130 395.8 L130 385.8 Q130 384.7 131 384Z" fill="#899db0"/><circle cx="755" cy="385.5" r="2.3" fill="#6d8296"/><circle cx="764" cy="385.5" r="2.3" fill="#6d8296"/><circle cx="773" cy="385.5" r="2.3" fill="#6d8296"/><g transform="translate(151,463) scale(1.0)"><ellipse cx="8.3" cy="3" rx="8.3" ry="3" fill="#8a8a8a"/><path d="M0 5.2 Q8.3 8.5 16.6 5.2 L16.6 19 Q16.6 22 13.6 22 L3 22 Q0 22 0 19 Z" fill="#8a8a8a"/><rect x="2.6" y="10.2" width="1.6" height="1.6" fill="#fff"/><rect x="5.7" y="10.2" width="1.6" height="1.6" fill="#fff"/><rect x="8.8" y="10.2" width="1.6" height="1.6" fill="#fff"/><rect x="11.9" y="10.2" width="1.6" height="1.6" fill="#fff"/><rect x="2.6" y="13.5" width="1.6" height="1.6" fill="#fff"/><rect x="5.7" y="13.5" width="1.6" height="1.6" fill="#fff"/><rect x="8.8" y="13.5" width="1.6" height="1.6" fill="#fff"/><rect x="11.9" y="13.5" width="1.6" height="1.6" fill="#fff"/><rect x="2.6" y="16.8" width="1.6" height="1.6" fill="#fff"/><rect x="5.7" y="16.8" width="1.6" height="1.6" fill="#fff"/><rect x="8.8" y="16.8" width="1.6" height="1.6" fill="#fff"/><rect x="11.9" y="16.8" width="1.6" height="1.6" fill="#fff"/></g><g transform="translate(147.8,558.2) scale(0.6) translate(-521.5,-1278.3)"><path d="M528 1283.5 Q528 1282 530 1281.7 L552 1278.5 Q554.5 1278.3 554.5 1280.5 L554.5 1308 L550 1308 L550 1288.5 L533 1291 L533 1310 L528 1310 Z" fill="#f23c60"/><ellipse cx="526.5" cy="1310.5" rx="5" ry="3.6" fill="#f23c60" transform="rotate(-15 526.5 1310.5)"/><ellipse cx="549.5" cy="1308" rx="5" ry="3.6" fill="#f23c60" transform="rotate(-15 549.5 1308)"/></g><g transform="translate(151,619) scale(1.0)"><ellipse cx="8.3" cy="3" rx="8.3" ry="3" fill="#8a8a8a"/><path d="M0 5.2 Q8.3 8.5 16.6 5.2 L16.6 19 Q16.6 22 13.6 22 L3 22 Q0 22 0 19 Z" fill="#8a8a8a"/><rect x="2.6" y="10.2" width="1.6" height="1.6" fill="#fff"/><rect x="5.7" y="10.2" width="1.6" height="1.6" fill="#fff"/><rect x="8.8" y="10.2" width="1.6" height="1.6" fill="#fff"/><rect x="11.9" y="10.2" width="1.6" height="1.6" fill="#fff"/><rect x="2.6" y="13.5" width="1.6" height="1.6" fill="#fff"/><rect x="5.7" y="13.5" width="1.6" height="1.6" fill="#fff"/><rect x="8.8" y="13.5" width="1.6" height="1.6" fill="#fff"/><rect x="11.9" y="13.5" width="1.6" height="1.6" fill="#fff"/><rect x="2.6" y="16.8" width="1.6" height="1.6" fill="#fff"/><rect x="5.7" y="16.8" width="1.6" height="1.6" fill="#fff"/><rect x="8.8" y="16.8" width="1.6" height="1.6" fill="#fff"/><rect x="11.9" y="16.8" width="1.6" height="1.6" fill="#fff"/></g><g transform="translate(151,716) scale(1.0)"><ellipse cx="8.3" cy="3" rx="8.3" ry="3" fill="#8a8a8a"/><path d="M0 5.2 Q8.3 8.5 16.6 5.2 L16.6 19 Q16.6 22 13.6 22 L3 22 Q0 22 0 19 Z" fill="#8a8a8a"/><rect x="2.6" y="10.2" width="1.6" height="1.6" fill="#fff"/><rect x="5.7" y="10.2" width="1.6" height="1.6" fill="#fff"/><rect x="8.8" y="10.2" width="1.6" height="1.6" fill="#fff"/><rect x="11.9" y="10.2" width="1.6" height="1.6" fill="#fff"/><rect x="2.6" y="13.5" width="1.6" height="1.6" fill="#fff"/><rect x="5.7" y="13.5" width="1.6" height="1.6" fill="#fff"/><rect x="8.8" y="13.5" width="1.6" height="1.6" fill="#fff"/><rect x="11.9" y="13.5" width="1.6" height="1.6" fill="#fff"/><rect x="2.6" y="16.8" width="1.6" height="1.6" fill="#fff"/><rect x="5.7" y="16.8" width="1.6" height="1.6" fill="#fff"/><rect x="8.8" y="16.8" width="1.6" height="1.6" fill="#fff"/><rect x="11.9" y="16.8" width="1.6" height="1.6" fill="#fff"/></g><g transform="translate(150,813.0) scale(1.0)"><ellipse cx="9" cy="5.2" rx="5" ry="5.4" fill="#6699f8"/><path d="M0 18.5 Q0 11.5 6 11.3 L12 11.3 Q18 11.5 18 18.5 Q18 22 9 22 Q0 22 0 18.5Z" fill="#6699f8"/></g><g transform="translate(150,874.4) scale(1.0)"><ellipse cx="9" cy="5.2" rx="5" ry="5.4" fill="#6699f8"/><path d="M0 18.5 Q0 11.5 6 11.3 L12 11.3 Q18 11.5 18 18.5 Q18 22 9 22 Q0 22 0 18.5Z" fill="#6699f8"/></g><g transform="translate(150,935.8) scale(1.0)"><ellipse cx="9" cy="5.2" rx="5" ry="5.4" fill="#6699f8"/><path d="M0 18.5 Q0 11.5 6 11.3 L12 11.3 Q18 11.5 18 18.5 Q18 22 9 22 Q0 22 0 18.5Z" fill="#6699f8"/></g><g transform="translate(150,997.2) scale(1.0)"><ellipse cx="9" cy="5.2" rx="5" ry="5.4" fill="#6699f8"/><path d="M0 18.5 Q0 11.5 6 11.3 L12 11.3 Q18 11.5 18 18.5 Q18 22 9 22 Q0 22 0 18.5Z" fill="#6699f8"/></g><g transform="translate(150,1058.6) scale(1.0)"><ellipse cx="9" cy="5.2" rx="5" ry="5.4" fill="#6699f8"/><path d="M0 18.5 Q0 11.5 6 11.3 L12 11.3 Q18 11.5 18 18.5 Q18 22 9 22 Q0 22 0 18.5Z" fill="#6699f8"/></g><g transform="translate(150,1120.0) scale(1.0)"><ellipse cx="9" cy="5.2" rx="5" ry="5.4" fill="#6699f8"/><path d="M0 18.5 Q0 11.5 6 11.3 L12 11.3 Q18 11.5 18 18.5 Q18 22 9 22 Q0 22 0 18.5Z" fill="#6699f8"/></g><g transform="translate(147,1183) scale(1.0)"><path d="M1 14 Q4 14.5 6 12.5 L11 7.5 Q12.5 6 15 6 L19 6" stroke="#2b4d9b" stroke-width="2.4" fill="none" stroke-linecap="round"/><path d="M12 11.5 Q14 14 17 14 L19 14" stroke="#2b4d9b" stroke-width="2.4" fill="none" stroke-linecap="round"/><path d="M17 2.5 L21.5 6 L17 9.5Z M17 10.5 L21.5 14 L17 17.5Z" fill="#2b4d9b" stroke="#2b4d9b" stroke-width="1" stroke-linejoin="round"/></g><circle cx="732" cy="945.5" r="11" fill="#e4e7eb"/><text x="732" y="951.0" font-family="Liberation Sans" font-weight="bold" font-size="15" fill="#fff" text-anchor="middle">?</text><circle cx="732" cy="1007" r="11" fill="#e4e7eb"/><text x="732" y="1012.5" font-family="Liberation Sans" font-weight="bold" font-size="15" fill="#fff" text-anchor="middle">?</text><ellipse cx="193.8" cy="1284.5" rx="12.6" ry="4.3" fill="#93a6b9"/><path d="M181.2 1288.8 Q193.8 1293.5 206.4 1288.8 L206.4 1309.5 Q206.4 1314 202 1314 L185.6 1314 Q181.2 1314 181.2 1309.5Z" fill="#93a6b9"/><circle cx="185.5" cy="1298.0" r="0.95" fill="#fff"/><circle cx="189.8" cy="1298.0" r="0.95" fill="#fff"/><circle cx="194.1" cy="1298.0" r="0.95" fill="#fff"/><circle cx="198.4" cy="1298.0" r="0.95" fill="#fff"/><circle cx="202.7" cy="1298.0" r="0.95" fill="#fff"/><circle cx="185.5" cy="1302.6" r="0.95" fill="#fff"/><circle cx="189.8" cy="1302.6" r="0.95" fill="#fff"/><circle cx="194.1" cy="1302.6" r="0.95" fill="#fff"/><circle cx="198.4" cy="1302.6" r="0.95" fill="#fff"/><circle cx="202.7" cy="1302.6" r="0.95" fill="#fff"/><circle cx="185.5" cy="1307.2" r="0.95" fill="#fff"/><circle cx="189.8" cy="1307.2" r="0.95" fill="#fff"/><circle cx="194.1" cy="1307.2" r="0.95" fill="#fff"/><circle cx="198.4" cy="1307.2" r="0.95" fill="#fff"/><circle cx="202.7" cy="1307.2" r="0.95" fill="#fff"/><ellipse cx="365.5" cy="1288.5" rx="7" ry="8.5" fill="#93a6b9"/><path d="M352 1307 Q352 1298 360 1297.5 Q365.5 1300.5 371 1297.5 Q379 1298 379 1307 Q379 1314 365.5 1314 Q352 1314 352 1307Z" fill="#93a6b9"/><g transform="translate(521.5,1278.3) scale(1.0) translate(-521.5,-1278.3)"><path d="M528 1283.5 Q528 1282 530 1281.7 L552 1278.5 Q554.5 1278.3 554.5 1280.5 L554.5 1308 L550 1308 L550 1288.5 L533 1291 L533 1310 L528 1310 Z" fill="#93a6b9"/><ellipse cx="526.5" cy="1310.5" rx="5" ry="3.6" fill="#93a6b9" transform="rotate(-15 526.5 1310.5)"/><ellipse cx="549.5" cy="1308" rx="5" ry="3.6" fill="#93a6b9" transform="rotate(-15 549.5 1308)"/></g><rect x="693" y="1280" width="34" height="34" rx="6" fill="#93a6b9"/><rect x="697.5" y="1288.5" width="25" height="21.5" rx="3" fill="#fff"/><path d="M701.5 1294 L706 1298 L701.5 1302" stroke="#93a6b9" stroke-width="2" fill="none"/><rect x="709.5" y="1296.8" width="8" height="2.6" rx="1.2" fill="#93a6b9"/></svg><div class="t" style="left:190px;top:465.9px;font-size:23.3px;color:#1f2a37;font-weight:normal;">I’m excited, I’ve always wanted to take a virtual</div><div class="t" style="left:190px;top:496.3px;font-size:23.3px;color:#1f2a37;font-weight:normal;">African safari.</div><div class="t" style="left:190px;top:557.3px;font-size:23.3px;color:#1f2a37;font-weight:normal;">masB01_african_start1.mp3</div><div class="t" style="left:190px;top:621.1px;font-size:23.3px;color:#1f2a37;font-weight:normal;">We are in Kruger National Park, which became South</div><div class="t" style="left:190px;top:651.8px;font-size:23.3px;color:#1f2a37;font-weight:normal;">Africa’s first national park in 1926.</div><div class="t" style="left:190px;top:718.7px;font-size:23.3px;color:#1f2a37;font-weight:normal;">&lt;break time="1.5s"/&gt;Would you like to go on a bush</div><div class="t" style="left:190px;top:749.9px;font-size:23.3px;color:#1f2a37;font-weight:normal;">walk or go to an archeology site?</div><div class="t" style="left:190px;top:812.8px;font-size:23.3px;color:#1f2a37;font-weight:normal;">bush walk</div><div class="t" style="left:190px;top:874.2px;font-size:23.3px;color:#1f2a37;font-weight:normal;">archeology site</div><div class="t" style="left:190px;top:935.6px;font-size:23.3px;color:#1f2a37;font-weight:normal;">help</div><div class="t" style="left:190px;top:997.0px;font-size:23.3px;color:#1f2a37;font-weight:normal;">stop</div><div class="t" style="left:190px;top:1058.4px;font-size:23.3px;color:#1f2a37;font-weight:normal;">storyline</div><div class="t" style="left:190px;top:1119.8px;font-size:23.3px;color:#1f2a37;font-weight:normal;">jump</div><div class="t" style="left:190px;top:1181.2px;font-size:23.3px;color:#1f2a37;font-weight:normal;">else</div><div class="a" style="left:2315px;top:389px;width:74px;height:74px;border-radius:50%;background:#fff;box-shadow:0 3px 8px rgba(60,80,110,0.18)"></div><svg class="a" style="left:2330px;top:404px" width="44" height="44">
<rect x="7.5" y="9.5" width="29" height="28" rx="6" fill="#3b5ee6"/>
<rect x="16" y="5.5" width="12" height="4" rx="2" fill="#3b5ee6"/>
<rect x="11" y="15" width="22" height="19" rx="3" fill="#fff"/>
<rect x="12" y="16" width="20" height="4" fill="#3b5ee6"/>
<path d="M22 22.5 V31.5 M17.5 27 H26.5" stroke="#3b5ee6" stroke-width="2.2"/>
</svg><div class="a" style="left:2341px;top:727px;width:48px;height:96px;border-radius:24px;background:#fff;box-shadow:0 3px 8px rgba(60,80,110,0.18)"></div><svg class="a" style="left:2341px;top:727px" width="48" height="96">
<path d="M24 14 V32 M15 23 H33" stroke="#8597aa" stroke-width="2.4"/>
<rect x="11" y="47" width="26" height="1" fill="#dde3ea"/>
<path d="M15 72 H33" stroke="#8597aa" stroke-width="2.4"/>
</svg><div class="a" style="left:2340px;top:845px;width:48px;height:48px;border-radius:50%;background:#fff;box-shadow:0 3px 8px rgba(60,80,110,0.18)"></div><svg class="a" style="left:2340px;top:845px" width="48" height="48">
<path d="M12 24 Q24 12 36 24 Q24 36 12 24Z" fill="#8597aa"/>
<circle cx="24" cy="24" r="5" fill="#fff"/><circle cx="24" cy="24" r="2.8" fill="#8597aa"/>
</svg><div class="a" style="left:2340px;top:915px;width:48px;height:48px;border-radius:50%;background:#fff;box-shadow:0 3px 8px rgba(60,80,110,0.18)"></div><svg class="a" style="left:2340px;top:915px" width="48" height="48">
<path d="M13 19 V15 Q13 13 15 13 H19 M29 13 H33 Q35 13 35 15 V19 M35 29 V33 Q35 35 33 35 H29 M19 35 H15 Q13 35 13 33 V29" stroke="#8597aa" stroke-width="2.2" fill="none"/>
<rect x="17" y="17" width="14" height="14" rx="1.5" fill="#8597aa"/>
</svg><svg class="a" style="left:2310px;top:1254px" width="84" height="84">
<circle cx="42" cy="42" r="42" fill="#2765c7"/>
<path d="M26 19 Q22 19 22 23 L22 55 Q22 59 26 59 L50 59 L62 64 L62 23 Q62 19 58 19Z" fill="#fff"/>
<path d="M28.5 47.5 Q42 56.5 55.5 47.5" stroke="#2765c7" stroke-width="2.4" fill="none" stroke-linecap="round"/>
</svg></div></div></body></html>
